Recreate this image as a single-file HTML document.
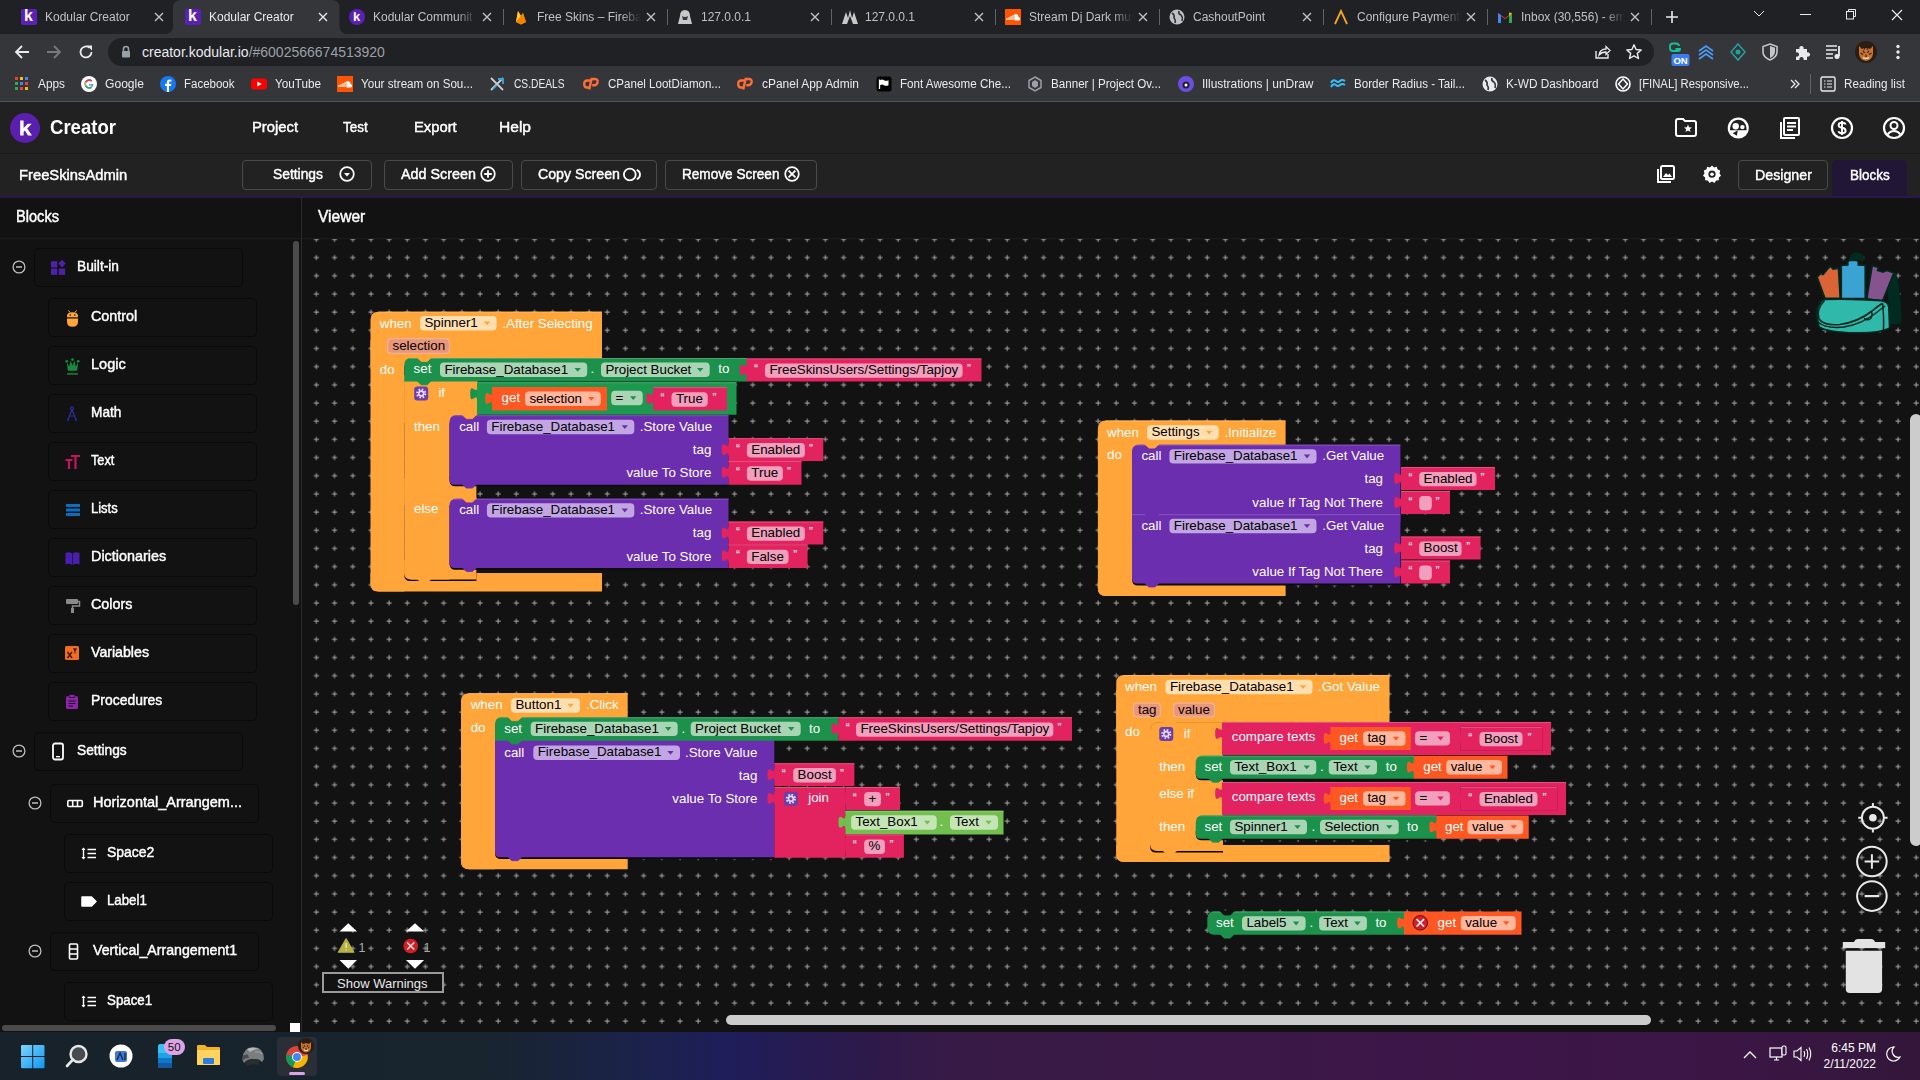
<!DOCTYPE html><html><head><meta charset="utf-8"><title>Kodular Creator</title><style>
*{box-sizing:border-box}
html,body{margin:0;padding:0}
body{width:1920px;height:1080px;position:relative;overflow:hidden;background:#121212;font-family:'Liberation Sans',sans-serif}
.t{position:absolute;white-space:nowrap;line-height:1}
.r{position:absolute}
svg{position:absolute;overflow:visible}
</style></head><body>
<div class="r" style="left:0.00px;top:0.00px;width:1920.00px;height:34.00px;background:#202124;border-radius:0px;"></div><div class="r" style="left:0.00px;top:34.00px;width:1920.00px;height:68.00px;background:#35363a;border-radius:0px;"></div><div class="r" style="left:0.00px;top:101.00px;width:1920.00px;height:1.00px;background:#4f5154;border-radius:0px;"></div><svg style="left:163px;top:0" width="188" height="35" viewBox="0 0 188 35"><path d="M0 34.5 Q10 34.5 10 26 L10 8 Q10 0 18 0 L168.5 0 Q176.5 0 176.5 8 L176.5 26 Q176.5 34.5 186.5 34.5 Z" fill="#35363a"/></svg><div class="r" style="left:20.5px;top:9px;width:16px;height:16px;background:#5b20b6;border-radius:2px"></div><div class="t" style="left:24.0px;top:8px;font-size:16px;font-weight:700;color:#fff">k</div><div class="t" style="left:45.0px;top:11px;width:104px;overflow:hidden;font-size:12px;color:#bdc1c6;-webkit-mask-image:linear-gradient(90deg,#000 80%,transparent)">Kodular Creator</div><svg style="left:153.5px;top:12px" width="10" height="10"><path d="M1 1L9 9M9 1L1 9" stroke="#bdc1c6" stroke-width="1.4"/></svg><div class="r" style="left:184.5px;top:9px;width:16px;height:16px;background:#5b20b6;border-radius:2px"></div><div class="t" style="left:188.0px;top:8px;font-size:16px;font-weight:700;color:#fff">k</div><div class="t" style="left:209.0px;top:11px;width:104px;overflow:hidden;font-size:12px;color:#e8eaed;-webkit-mask-image:linear-gradient(90deg,#000 80%,transparent)">Kodular Creator</div><svg style="left:317.5px;top:12px" width="10" height="10"><path d="M1 1L9 9M9 1L1 9" stroke="#e8eaed" stroke-width="1.4"/></svg><div class="r" style="left:348.5px;top:9px;width:16px;height:16px;background:#5b20b6;border-radius:8px"></div><div class="t" style="left:353.0px;top:10px;font-size:13px;font-weight:700;color:#fff">k</div><div class="t" style="left:373.0px;top:11px;width:104px;overflow:hidden;font-size:12px;color:#bdc1c6;-webkit-mask-image:linear-gradient(90deg,#000 80%,transparent)">Kodular Communit</div><svg style="left:481.5px;top:12px" width="10" height="10"><path d="M1 1L9 9M9 1L1 9" stroke="#bdc1c6" stroke-width="1.4"/></svg><svg style="left:512.5px;top:9px" width="16" height="16"><path d="M3 13L5 2L8 7L10 4L13 13L8 15.5Z" fill="#ffa000"/><path d="M3 13L5 2L8 7Z" fill="#ffca28"/><path d="M3 13L10 4L13 13L8 15.5Z" fill="#f57c00" opacity=".8"/></svg><div class="t" style="left:537.0px;top:11px;width:104px;overflow:hidden;font-size:12px;color:#bdc1c6;-webkit-mask-image:linear-gradient(90deg,#000 80%,transparent)">Free Skins – Firebase</div><svg style="left:645.5px;top:12px" width="10" height="10"><path d="M1 1L9 9M9 1L1 9" stroke="#bdc1c6" stroke-width="1.4"/></svg><svg style="left:676.5px;top:9px" width="16" height="16"><path d="M8 1Q3 1 3 7L1 15H15L13 7Q13 1 8 1Z" fill="#c8c8c8"/><path d="M5 7Q8 9 11 7L10 11H6Z" fill="#35363a"/></svg><div class="t" style="left:701.0px;top:11px;width:104px;overflow:hidden;font-size:12px;color:#bdc1c6;-webkit-mask-image:linear-gradient(90deg,#000 80%,transparent)">127.0.0.1</div><svg style="left:809.5px;top:12px" width="10" height="10"><path d="M1 1L9 9M9 1L1 9" stroke="#bdc1c6" stroke-width="1.4"/></svg><svg style="left:840.5px;top:9px" width="18" height="16"><path d="M1 15L5 3L7 9L9 1L11 9L13 3L17 15Z" fill="#c8c8c8"/><path d="M6 15L9 7L12 15Z" fill="#202124"/></svg><div class="t" style="left:865.0px;top:11px;width:104px;overflow:hidden;font-size:12px;color:#bdc1c6;-webkit-mask-image:linear-gradient(90deg,#000 80%,transparent)">127.0.0.1</div><svg style="left:973.5px;top:12px" width="10" height="10"><path d="M1 1L9 9M9 1L1 9" stroke="#bdc1c6" stroke-width="1.4"/></svg><svg style="left:1004.5px;top:9px" width="16" height="16"><rect width="16" height="16" fill="#ff5500"/><path d="M6 11V7M8 11V6M10 11V5.5Q13 5.5 13 8.5Q14.5 8.5 14.5 10Q14.5 11 13 11Z M4 11V8M2 11V9" stroke="#fff" stroke-width="1.2" fill="#fff"/></svg><div class="t" style="left:1029.0px;top:11px;width:104px;overflow:hidden;font-size:12px;color:#bdc1c6;-webkit-mask-image:linear-gradient(90deg,#000 80%,transparent)">Stream Dj Dark music</div><svg style="left:1137.5px;top:12px" width="10" height="10"><path d="M1 1L9 9M9 1L1 9" stroke="#bdc1c6" stroke-width="1.4"/></svg><svg style="left:1168.5px;top:9px" width="16" height="16"><circle cx="8" cy="8" r="7.5" fill="#bdc1c6"/><path d="M3 4Q6 6 5 9Q7 11 6 14M10 2Q9 5 12 6Q14 8 13 12" stroke="#35363a" stroke-width="1.6" fill="none"/></svg><div class="t" style="left:1193.0px;top:11px;width:104px;overflow:hidden;font-size:12px;color:#bdc1c6;-webkit-mask-image:linear-gradient(90deg,#000 80%,transparent)">CashoutPoint</div><svg style="left:1301.5px;top:12px" width="10" height="10"><path d="M1 1L9 9M9 1L1 9" stroke="#bdc1c6" stroke-width="1.4"/></svg><svg style="left:1332.5px;top:9px" width="16" height="16"><path d="M2 15L8 2L14 15" stroke="#f5a623" stroke-width="1.8" fill="none"/></svg><div class="t" style="left:1357.0px;top:11px;width:104px;overflow:hidden;font-size:12px;color:#bdc1c6;-webkit-mask-image:linear-gradient(90deg,#000 80%,transparent)">Configure Payments</div><svg style="left:1465.5px;top:12px" width="10" height="10"><path d="M1 1L9 9M9 1L1 9" stroke="#bdc1c6" stroke-width="1.4"/></svg><svg style="left:1496.5px;top:9px" width="16" height="16"><path d="M1 4V14H4V7L8 10L12 7V14H15V4L8 9Z" fill="#ea4335"/><path d="M1 4V14H4V6Z" fill="#4285f4"/><path d="M15 4V14H12V6Z" fill="#34a853"/><path d="M12 3.5L15 4L12 7Z" fill="#fbbc04"/></svg><div class="t" style="left:1521.0px;top:11px;width:104px;overflow:hidden;font-size:12px;color:#bdc1c6;-webkit-mask-image:linear-gradient(90deg,#000 80%,transparent)">Inbox (30,556) - email</div><svg style="left:1629.5px;top:12px" width="10" height="10"><path d="M1 1L9 9M9 1L1 9" stroke="#bdc1c6" stroke-width="1.4"/></svg><div class="r" style="left:502.50px;top:9.00px;width:1.00px;height:16.00px;background:#5f6368;border-radius:0px;"></div><div class="r" style="left:666.50px;top:9.00px;width:1.00px;height:16.00px;background:#5f6368;border-radius:0px;"></div><div class="r" style="left:830.50px;top:9.00px;width:1.00px;height:16.00px;background:#5f6368;border-radius:0px;"></div><div class="r" style="left:994.50px;top:9.00px;width:1.00px;height:16.00px;background:#5f6368;border-radius:0px;"></div><div class="r" style="left:1158.50px;top:9.00px;width:1.00px;height:16.00px;background:#5f6368;border-radius:0px;"></div><div class="r" style="left:1322.50px;top:9.00px;width:1.00px;height:16.00px;background:#5f6368;border-radius:0px;"></div><div class="r" style="left:1486.50px;top:9.00px;width:1.00px;height:16.00px;background:#5f6368;border-radius:0px;"></div><div class="r" style="left:1650.50px;top:9.00px;width:1.00px;height:16.00px;background:#5f6368;border-radius:0px;"></div><svg style="left:1665px;top:10px" width="14" height="14"><path d="M7 1V13M1 7H13" stroke="#e8eaed" stroke-width="1.6"/></svg><svg style="left:1753px;top:10px" width="12" height="8"><path d="M1 1L6 6L11 1" stroke="#e8eaed" stroke-width="1" fill="none"/></svg><div class="r" style="left:1800.00px;top:14.00px;width:11.00px;height:1.00px;background:#e8eaed;border-radius:0px;"></div><svg style="left:1844px;top:8px" width="14" height="13"><rect x="2.5" y="3.5" width="7" height="7.5" stroke="#e8eaed" stroke-width="1" fill="none"/><path d="M4.5 3.5V1.5H11.5V8.5H9.5" stroke="#e8eaed" stroke-width="1" fill="none"/></svg><svg style="left:1891px;top:9px" width="12" height="12"><path d="M1 1L11 11M11 1L1 11" stroke="#e8eaed" stroke-width="1.2"/></svg><svg style="left:14px;top:44px" width="16" height="16"><path d="M15 8H2M8 2L2 8L8 14" stroke="#e8eaed" stroke-width="1.8" fill="none"/></svg><svg style="left:46px;top:44px" width="16" height="16"><path d="M1 8H14M8 2L14 8L8 14" stroke="#77797d" stroke-width="1.8" fill="none"/></svg><svg style="left:78px;top:44px" width="16" height="16"><path d="M13.5 8A5.5 5.5 0 1 1 11.5 3.7" stroke="#e8eaed" stroke-width="1.8" fill="none"/><path d="M9 1.5H14V6.5Z" fill="#e8eaed"/></svg><div class="r" style="left:108.00px;top:38.00px;width:1546.00px;height:28.00px;background:#202124;border-radius:14px;"></div><svg style="left:121px;top:45px" width="10" height="13"><path d="M2.5 6V4A2.5 2.5 0 0 1 7.5 4V6" stroke="#9aa0a6" stroke-width="1.6" fill="none"/><rect x="1" y="6" width="8" height="6.5" rx="1" fill="#9aa0a6"/></svg><div class="t" style="left:142.00px;top:45.15px;font-size:14px;color:#e8eaed;font-weight:400;">creator.kodular.io<span style="color:#9aa0a6">/#6002566674513920</span></div><svg style="left:1594px;top:44px" width="17" height="16"><path d="M2 7V14H14V10" stroke="#e8eaed" stroke-width="1.4" fill="none"/><path d="M5 11Q6 5 12 5V2.5L16 6.5L12 10.5V8Q7.5 8 5 11Z" stroke="#e8eaed" stroke-width="1.3" fill="none"/></svg><svg style="left:1625px;top:43px" width="18" height="18"><path d="M9 1.8L11.1 6.5L16.2 7L12.3 10.4L13.5 15.5L9 12.8L4.5 15.5L5.7 10.4L1.8 7L6.9 6.5Z" stroke="#e8eaed" stroke-width="1.4" fill="none" stroke-linejoin="round"/></svg><svg style="left:1667px;top:41px" width="24" height="26"><path d="M12 5Q12 2.5 9 2.5H6Q3 2.5 3 5.5V7Q3 10 6 10H11Q13 10 13 8H8.5" stroke="#15c39a" stroke-width="1.8" fill="none"/><rect x="4.5" y="13" width="18" height="12" rx="2" fill="#3b7ded"/><text x="13.5" y="22.8" font-size="9.5" font-family="Liberation Sans" font-weight="700" fill="#fff" text-anchor="middle">ON</text></svg><svg style="left:1698px;top:44px" width="16" height="16"><path d="M1 7L8 2L15 7M1 11L8 6L15 11M1 15L8 10L15 15" stroke="#4b9bf5" stroke-width="1.7" fill="none"/></svg><svg style="left:1729px;top:43px" width="18" height="18"><path d="M9 1L16 9L9 17L2 9Z" stroke="#21a29a" stroke-width="1.5" fill="none"/><circle cx="9" cy="9" r="2.5" fill="#21a29a"/></svg><svg style="left:1761px;top:43px" width="18" height="18"><path d="M9 1L16 3.5V9Q16 14 9 17Q2 14 2 9V3.5Z" stroke="#c4c7c5" stroke-width="1.6" fill="none"/><path d="M9 3V15Q14 12.5 14 8.5V4.8Z" fill="#c4c7c5"/></svg><svg style="left:1793px;top:43px" width="18" height="18"><path d="M3 6H6.5A2.2 2.2 0 1 1 10.5 6H14V9.5A2.2 2.2 0 1 1 14 13.5V17H10.5A2.2 2.2 0 1 0 6.5 17H3V13.5A2.2 2.2 0 1 0 3 9.5Z" fill="#e8eaed"/></svg><svg style="left:1825px;top:44px" width="18" height="16"><path d="M1 2H12M1 6H12M1 10H8M1 14H8" stroke="#e8eaed" stroke-width="1.6"/><path d="M14 2V12" stroke="#e8eaed" stroke-width="1.8"/><circle cx="12" cy="12.5" r="2.5" fill="#e8eaed"/></svg><svg style="left:1855px;top:41px" width="22" height="22"><circle cx="11" cy="11" r="11" fill="#2a1e14"/><path d="M4 5L7 8Q11 6 15 8L18 5V13Q17 19 11 20Q5 19 4 13Z" fill="#c8742e"/><path d="M8 9.5L9.5 12M14 9.5L12.5 12M11 13.5V16M5.5 12L8 13.5M16.5 12L14 13.5M9 6.5L10 8.5M13 6.5L12 8.5" stroke="#2a1a10" stroke-width="1.1"/><path d="M8 16.5Q11 18.5 14 16.5" stroke="#eee" stroke-width="1.3" fill="none"/></svg><svg style="left:1895px;top:44px" width="6" height="16"><circle cx="3" cy="2.5" r="1.7" fill="#e8eaed"/><circle cx="3" cy="8" r="1.7" fill="#e8eaed"/><circle cx="3" cy="13.5" r="1.7" fill="#e8eaed"/></svg><div class="r" style="left:15.0px;top:77px;width:3px;height:3px;background:#ea4335"></div><div class="r" style="left:20.0px;top:77px;width:3px;height:3px;background:#fbbc04"></div><div class="r" style="left:25.0px;top:77px;width:3px;height:3px;background:#4285f4"></div><div class="r" style="left:15.0px;top:82px;width:3px;height:3px;background:#34a853"></div><div class="r" style="left:20.0px;top:82px;width:3px;height:3px;background:#4285f4"></div><div class="r" style="left:25.0px;top:82px;width:3px;height:3px;background:#ea4335"></div><div class="r" style="left:15.0px;top:87px;width:3px;height:3px;background:#34a853"></div><div class="r" style="left:20.0px;top:87px;width:3px;height:3px;background:#ea4335"></div><div class="r" style="left:25.0px;top:87px;width:3px;height:3px;background:#fbbc04"></div><div class="t" style="left:38.00px;top:77.84px;font-size:12px;color:#e8eaed;font-weight:400;transform:scaleX(0.9871);transform-origin:0 0;">Apps</div><svg style="left:81.0px;top:76px" width="16" height="16"><circle cx="8" cy="8" r="8" fill="#fff"/><path d="M12.5 8.2H8V9.6H11A3.2 3.2 0 1 1 10.3 5.6L11.3 4.6A4.6 4.6 0 1 0 12.5 8.2Z" fill="#4285f4"/><path d="M4.1 6.1A4.6 4.6 0 0 1 11.3 4.6L10.3 5.6A3.2 3.2 0 0 0 5.4 6.8Z" fill="#ea4335"/><path d="M4.1 6.1L5.4 6.8A3.2 3.2 0 0 0 5.4 9.2L4.1 10Z" fill="#fbbc04"/><path d="M4.1 10L5.4 9.2A3.2 3.2 0 0 0 10 10.8L11 12A4.6 4.6 0 0 1 4.1 10Z" fill="#34a853"/></svg><div class="t" style="left:104.50px;top:77.84px;font-size:12px;color:#e8eaed;font-weight:400;transform:scaleX(1.0079);transform-origin:0 0;">Google</div><svg style="left:160.0px;top:76px" width="16" height="16"><circle cx="8" cy="8" r="8" fill="#1877f2"/><path d="M9 16V10H11L11.3 7.8H9V6.5Q9 5.6 10 5.6H11.4V3.7Q10.6 3.5 9.7 3.5Q6.9 3.5 6.9 6.3V7.8H5V10H6.9V16Z" fill="#fff"/></svg><div class="t" style="left:184.00px;top:77.84px;font-size:12px;color:#e8eaed;font-weight:400;transform:scaleX(0.9583);transform-origin:0 0;">Facebook</div><svg style="left:251.0px;top:76px" width="16" height="16"><rect x="0" y="2.5" width="16" height="11" rx="3" fill="#ff0000"/><path d="M6.3 5.5L10.8 8L6.3 10.5Z" fill="#fff"/></svg><div class="t" style="left:274.50px;top:77.84px;font-size:12px;color:#e8eaed;font-weight:400;transform:scaleX(0.9755);transform-origin:0 0;">YouTube</div><svg style="left:337.0px;top:76px" width="16" height="16"><rect width="16" height="16" fill="#ff5500"/><path d="M6 11V7M8 11V6M10 11V5.5Q13 5.5 13 8.5Q14.5 8.5 14.5 10Q14.5 11 13 11Z M4 11V8M2 11V9" stroke="#fff" stroke-width="1.2" fill="#fff"/></svg><div class="t" style="left:361.00px;top:77.84px;font-size:12px;color:#e8eaed;font-weight:400;transform:scaleX(0.9687);transform-origin:0 0;">Your stream on Sou...</div><svg style="left:489.0px;top:76px" width="16" height="16"><path d="M2 2L14 14M14 2L2 14" stroke="#c8ccd0" stroke-width="1.8"/><path d="M9 3L14 3L14 8" stroke="#3aa8d8" stroke-width="1.8" fill="none"/><path d="M4 13L8 9" stroke="#3aa8d8" stroke-width="1.6"/></svg><div class="t" style="left:514.00px;top:77.84px;font-size:12px;color:#e8eaed;font-weight:400;transform:scaleX(0.8508);transform-origin:0 0;">CS.DEALS</div><svg style="left:583.0px;top:76px" width="16" height="16"><path d="M7.2 4.5H4.2Q1.2 4.5 1.2 8Q1.2 11.5 4 11.5H5.5M6.2 13.5L8.6 3H11.8Q15 3 14.6 6.2Q14.2 9.3 11 9.3H9.2" stroke="#ff6c37" stroke-width="2.4" fill="none"/></svg><div class="t" style="left:608.00px;top:77.84px;font-size:12px;color:#e8eaed;font-weight:400;transform:scaleX(0.9625);transform-origin:0 0;">CPanel LootDiamon...</div><svg style="left:737.0px;top:76px" width="16" height="16"><path d="M7.2 4.5H4.2Q1.2 4.5 1.2 8Q1.2 11.5 4 11.5H5.5M6.2 13.5L8.6 3H11.8Q15 3 14.6 6.2Q14.2 9.3 11 9.3H9.2" stroke="#ff6c37" stroke-width="2.4" fill="none"/></svg><div class="t" style="left:762.00px;top:77.84px;font-size:12px;color:#e8eaed;font-weight:400;transform:scaleX(0.9959);transform-origin:0 0;">cPanel App Admin</div><svg style="left:876.0px;top:76px" width="16" height="16"><rect x="0.5" y="0.5" width="15" height="15" rx="2.5" fill="#000"/><path d="M3.5 3.5V13" stroke="#fff" stroke-width="1.3"/><path d="M4 4.2Q6 3 8 4.2Q10 5.4 12.5 4.2V9.2Q10 10.4 8 9.2Q6 8 4 9.2Z" fill="#fff"/></svg><div class="t" style="left:900.00px;top:77.84px;font-size:12px;color:#e8eaed;font-weight:400;transform:scaleX(0.9694);transform-origin:0 0;">Font Awesome Che...</div><svg style="left:1027.0px;top:76px" width="16" height="16"><path d="M8 1L14 4.5V11.5L8 15L2 11.5V4.5Z" stroke="#9aa0a6" stroke-width="1.5" fill="none"/><path d="M8 4L11 6V10L8 12L5 10V6Z" fill="#9aa0a6"/></svg><div class="t" style="left:1051.00px;top:77.84px;font-size:12px;color:#e8eaed;font-weight:400;transform:scaleX(0.9682);transform-origin:0 0;">Banner | Project Ov...</div><svg style="left:1178.0px;top:76px" width="16" height="16"><circle cx="8" cy="8" r="8" fill="#6c4ee3"/><circle cx="8" cy="9" r="3.5" fill="#202124"/><circle cx="8" cy="9" r="1.5" fill="#fff"/></svg><div class="t" style="left:1202.00px;top:77.84px;font-size:12px;color:#e8eaed;font-weight:400;transform:scaleX(0.9971);transform-origin:0 0;">Illustrations | unDraw</div><svg style="left:1330.0px;top:76px" width="16" height="16"><path d="M1 7Q3 3 6 5Q8 7 10 5Q12 3 15 5M1 11Q3 7 6 9Q8 11 10 9Q12 7 15 9" stroke="#38bdf8" stroke-width="2" fill="none"/></svg><div class="t" style="left:1354.00px;top:77.84px;font-size:12px;color:#e8eaed;font-weight:400;transform:scaleX(0.9639);transform-origin:0 0;">Border Radius - Tail...</div><svg style="left:1482.0px;top:76px" width="16" height="16"><circle cx="8" cy="8" r="7.5" fill="#e8eaed"/><path d="M3 4Q6 6 5 9Q7 11 6 14M10 2Q9 5 12 6Q14 8 13 12" stroke="#35363a" stroke-width="1.6" fill="none"/></svg><div class="t" style="left:1506.00px;top:77.84px;font-size:12px;color:#e8eaed;font-weight:400;transform:scaleX(0.9837);transform-origin:0 0;">K-WD Dashboard</div><svg style="left:1615.0px;top:76px" width="16" height="16"><circle cx="8" cy="8" r="7" stroke="#fff" stroke-width="1.6" fill="none"/><path d="M8 3L12.5 8L8 13L3.5 8Z" stroke="#fff" stroke-width="1.5" fill="none"/></svg><div class="t" style="left:1639.00px;top:77.84px;font-size:12px;color:#e8eaed;font-weight:400;transform:scaleX(0.9425);transform-origin:0 0;">[FINAL] Responsive...</div><svg style="left:1790px;top:79px" width="10" height="10"><path d="M1 1L5 5L1 9M5 1L9 5L5 9" stroke="#e8eaed" stroke-width="1.3" fill="none"/></svg><div class="r" style="left:1810.00px;top:74.00px;width:1.00px;height:20.00px;background:#5f6368;border-radius:0px;"></div><svg style="left:1820px;top:76px" width="16" height="16"><rect x="1" y="1" width="14" height="14" rx="1.5" stroke="#e8eaed" stroke-width="1.4" fill="none"/><path d="M4 5H5.5M7 5H12M4 8H5.5M7 8H12M4 11H5.5M7 11H12" stroke="#e8eaed" stroke-width="1.2"/></svg><div class="t" style="left:1844.00px;top:77.84px;font-size:12px;color:#e8eaed;font-weight:400;transform:scaleX(0.9729);transform-origin:0 0;">Reading list</div><div class="r" style="left:0.00px;top:102.00px;width:1920.00px;height:51.00px;background:#212121;border-radius:0px;"></div><div class="r" style="left:0.00px;top:153.00px;width:1920.00px;height:1.00px;background:#1a1a1a;border-radius:0px;"></div><div class="r" style="left:0.00px;top:154.00px;width:1920.00px;height:42.00px;background:#222222;border-radius:0px;"></div><div class="r" style="left:0.00px;top:196.00px;width:1920.00px;height:2.00px;background:#28194a;border-radius:0px;"></div><svg style="left:10px;top:113px" width="30" height="30"><circle cx="15" cy="15" r="15" fill="#5a1fad"/><path d="M10.2 7.5H13.6V15L17.8 10.8H21.8L17.2 15.4L22 22.5H18L14.9 17.6L13.6 18.8V22.5H10.2Z" fill="#fff"/></svg><div class="t" style="left:50.00px;top:116.89px;font-size:20.8px;color:#ffffff;font-weight:700;transform:scaleX(0.8922);transform-origin:0 0;">Creator</div><div class="t" style="left:251.70px;top:118.96px;font-size:15.4px;color:#ffffff;font-weight:400;transform:scaleX(0.9618);transform-origin:0 0;-webkit-text-stroke:0.45px #fff">Project</div><div class="t" style="left:343.10px;top:118.96px;font-size:15.4px;color:#ffffff;font-weight:400;transform:scaleX(0.8745);transform-origin:0 0;-webkit-text-stroke:0.45px #fff">Test</div><div class="t" style="left:413.75px;top:118.96px;font-size:15.4px;color:#ffffff;font-weight:400;transform:scaleX(0.9594);transform-origin:0 0;-webkit-text-stroke:0.45px #fff">Export</div><div class="t" style="left:498.60px;top:118.96px;font-size:15.4px;color:#ffffff;font-weight:400;transform:scaleX(1.0103);transform-origin:0 0;-webkit-text-stroke:0.45px #fff">Help</div><svg style="left:1674px;top:116px" width="24" height="24"><path d="M2 5Q2 3 4 3H9L11 5H20Q22 5 22 7V18Q22 20 20 20H4Q2 20 2 18Z" stroke="#fff" stroke-width="2" fill="none"/><path d="M14 8.5L15.1 11.2L18 11.4L15.8 13.2L16.5 16L14 14.5L11.5 16L12.2 13.2L10 11.4L12.9 11.2Z" fill="#fff"/></svg><svg style="left:1726px;top:116px" width="24" height="24"><circle cx="12.3" cy="12" r="10.6" fill="#fff"/><path d="M4 14.3C4 7.5 7.5 3.8 12.3 3.8C17.1 3.8 20.6 7.5 20.6 14.3Z" fill="#212121"/><circle cx="9.7" cy="10.3" r="3.2" fill="#fff"/><circle cx="16.4" cy="11.1" r="2.2" fill="#fff"/><path d="M6.7 17.3L11.8 14.2L10.9 19.7Z" fill="#212121"/></svg><svg style="left:1778px;top:116px" width="24" height="24"><rect x="6" y="2" width="15" height="17" rx="1" stroke="#fff" stroke-width="2" fill="none"/><path d="M3 6V22H17" stroke="#fff" stroke-width="2" fill="none"/><path d="M9 7H18M9 10.5H18M9 14H15" stroke="#fff" stroke-width="1.8"/></svg><svg style="left:1830px;top:116px" width="24" height="24"><circle cx="12" cy="12" r="10" stroke="#fff" stroke-width="2.2" fill="none"/><path d="M15.5 8.5Q15 6.8 12 6.8Q8.6 6.8 8.6 9.2Q8.6 11.3 12 11.8Q15.6 12.4 15.6 14.7Q15.6 17.2 12 17.2Q9 17.2 8.4 15.3M12 5V19" stroke="#fff" stroke-width="1.9" fill="none"/></svg><svg style="left:1882px;top:116px" width="24" height="24"><circle cx="12" cy="12" r="10" stroke="#fff" stroke-width="2.2" fill="none"/><circle cx="12" cy="9.5" r="3.5" stroke="#fff" stroke-width="2" fill="none"/><path d="M5.5 18.5Q8 15 12 15Q16 15 18.5 18.5" stroke="#fff" stroke-width="2" fill="none"/></svg><div class="t" style="left:19.30px;top:166.68px;font-size:15.5px;color:#ffffff;font-weight:400;transform:scaleX(0.9524);transform-origin:0 0;-webkit-text-stroke:0.45px #fff">FreeSkinsAdmin</div><div class="r" style="left:242px;top:160px;width:130px;height:30px;border:1px solid #4a4a4a;border-radius:4px"></div><div class="t" style="left:272.50px;top:166.26px;font-size:15.4px;color:#ffffff;font-weight:400;transform:scaleX(0.8986);transform-origin:0 0;-webkit-text-stroke:0.45px #fff">Settings</div><div class="r" style="left:384px;top:160px;width:128.5px;height:30px;border:1px solid #4a4a4a;border-radius:4px"></div><div class="t" style="left:401.00px;top:166.26px;font-size:15.4px;color:#ffffff;font-weight:400;transform:scaleX(0.9320);transform-origin:0 0;-webkit-text-stroke:0.45px #fff">Add Screen</div><div class="r" style="left:521px;top:160px;width:135.5px;height:30px;border:1px solid #4a4a4a;border-radius:4px"></div><div class="t" style="left:538.00px;top:166.26px;font-size:15.4px;color:#ffffff;font-weight:400;transform:scaleX(0.9211);transform-origin:0 0;-webkit-text-stroke:0.45px #fff">Copy Screen</div><div class="r" style="left:665px;top:160px;width:151.5px;height:30px;border:1px solid #4a4a4a;border-radius:4px"></div><div class="t" style="left:681.50px;top:166.26px;font-size:15.4px;color:#ffffff;font-weight:400;transform:scaleX(0.8830);transform-origin:0 0;-webkit-text-stroke:0.45px #fff">Remove Screen</div><svg style="left:338.5px;top:166px" width="16" height="16"><circle cx="8" cy="8" r="6.8" stroke="#fff" stroke-width="1.7" fill="none"/><path d="M5 7H11L8 10.5Z" fill="#fff"/></svg><svg style="left:480px;top:166px" width="16" height="16"><circle cx="8" cy="8" r="6.8" stroke="#fff" stroke-width="1.7" fill="none"/><path d="M8 4.2V11.8M4.2 8H11.8" stroke="#fff" stroke-width="1.8"/></svg><svg style="left:622px;top:166px" width="22" height="17"><circle cx="7.8" cy="8.5" r="5.9" stroke="#fff" stroke-width="1.8" fill="none"/><path d="M14.7 3.8A5 5 0 0 1 14.7 13.2" stroke="#fff" stroke-width="1.8" fill="none"/></svg><svg style="left:783.6px;top:166px" width="16" height="16"><circle cx="8" cy="8" r="6.8" stroke="#fff" stroke-width="1.7" fill="none"/><path d="M4.6 4.6L11.4 11.4M11.4 4.6L4.6 11.4" stroke="#fff" stroke-width="1.8"/></svg><svg style="left:1656px;top:164px" width="20" height="20"><rect x="5" y="2" width="13" height="13" rx="1.5" stroke="#fff" stroke-width="2" fill="none"/><path d="M2 5V18H15" stroke="#fff" stroke-width="2" fill="none"/><path d="M7 13L10 9L12 11L13.5 9.5L16 13Z" fill="#fff"/></svg><svg style="left:1702px;top:164px" width="20" height="20"><path d="M10 1.5L12 3.5L14.8 2.8L15.6 5.5L18.2 6.5L17.5 9.3L19 11.7L16.8 13.4L16.9 16.3L14.1 16.6L12.5 19L10 17.6L7.5 19L5.9 16.6L3.1 16.3L3.2 13.4L1 11.7L2.5 9.3L1.8 6.5L4.4 5.5L5.2 2.8L8 3.5Z" fill="#fff"/><circle cx="10" cy="10.2" r="3.6" fill="#222"/><circle cx="10" cy="10.2" r="1.8" fill="#fff"/></svg><div class="r" style="left:1737.5px;top:160px;width:90px;height:30px;border:1px solid #4a4a4a;border-radius:4px"></div><div class="t" style="left:1754.50px;top:166.86px;font-size:15.4px;color:#ffffff;font-weight:400;transform:scaleX(0.9232);transform-origin:0 0;-webkit-text-stroke:0.45px #fff">Designer</div><div class="r" style="left:1832.20px;top:160.00px;width:74.40px;height:36.00px;background:#211636;border-radius:0px;border-radius:5px 5px 0 0"></div><div class="t" style="left:1849.70px;top:166.86px;font-size:15.4px;color:#ffffff;font-weight:400;transform:scaleX(0.8753);transform-origin:0 0;-webkit-text-stroke:0.45px #fff">Blocks</div><div class="r" style="left:0.00px;top:198.00px;width:301.00px;height:834.00px;background:#121212;border-radius:0px;"></div><div class="r" style="left:301.00px;top:198.00px;width:1.00px;height:834.00px;background:#2a2a2a;border-radius:0px;"></div><div class="r" style="left:302.00px;top:198.00px;width:1618.00px;height:834.00px;background:#121212;border-radius:0px;"></div><div class="t" style="left:16.40px;top:208.73px;font-size:15.8px;color:#ffffff;font-weight:400;transform:scaleX(0.9240);transform-origin:0 0;-webkit-text-stroke:0.45px #fff">Blocks</div><div class="t" style="left:318.00px;top:208.73px;font-size:15.8px;color:#ffffff;font-weight:400;transform:scaleX(0.9852);transform-origin:0 0;-webkit-text-stroke:0.45px #fff">Viewer</div><div class="r" style="left:0.00px;top:238.00px;width:301.00px;height:1.00px;background:#1b1b1b;border-radius:0px;"></div><div class="r" style="left:302.00px;top:238.00px;width:1618.00px;height:1.00px;background:#1b1b1b;border-radius:0px;"></div><div class="r" style="left:292.50px;top:241.00px;width:6.00px;height:364.00px;background:#4b4b4b;border-radius:3px;"></div><div class="r" style="left:33.5px;top:247.5px;width:209.0px;height:39.0px;border:1px solid #0a0a0a;border-radius:5px"></div><svg style="left:12px;top:260.0px" width="14" height="14"><circle cx="7" cy="7" r="5.9" stroke="#bdbdbd" stroke-width="1.3" fill="none"/><path d="M4 7H10" stroke="#bdbdbd" stroke-width="1.5"/></svg><svg style="left:51.0px;top:259.0px" width="16" height="18"><rect x="0" y="2.2" width="6.3" height="6.3" fill="#4e22a8"/><rect x="0" y="9.6" width="6.3" height="6.3" fill="#4e22a8"/><rect x="7.8" y="9.6" width="6.3" height="6.3" fill="#4e22a8"/><path d="M11 0.8L14.8 4.6L11 8.4L7.2 4.6Z" fill="#4e22a8"/></svg><div class="t" style="left:77.00px;top:258.16px;font-size:15.4px;color:#ffffff;font-weight:400;transform:scaleX(0.8922);transform-origin:0 0;-webkit-text-stroke:0.45px #fff">Built-in</div><div class="r" style="left:47.5px;top:297.5px;width:209.0px;height:39.0px;border:1px solid #0a0a0a;border-radius:5px"></div><svg style="left:64.5px;top:309.0px" width="16" height="18"><path d="M3.5 1.3L5 3.6M11.5 1.3L10 3.6" stroke="#ffa63a" stroke-width="1"/><path d="M2 8.3V6.8Q2 3.2 7.5 3.2Q13 3.2 13 6.8V8.3Z" fill="#ffa63a"/><path d="M2 9.4H13V12.8Q13 17.8 7.5 17.8Q2 17.8 2 12.8Z" fill="#ffa63a"/><rect x="4.6" y="5.3" width="1.3" height="1.4" fill="#121212"/><rect x="9.1" y="5.3" width="1.3" height="1.4" fill="#121212"/></svg><div class="t" style="left:91.00px;top:308.16px;font-size:15.4px;color:#ffffff;font-weight:400;transform:scaleX(0.9326);transform-origin:0 0;-webkit-text-stroke:0.45px #fff">Control</div><div class="r" style="left:47.5px;top:345.5px;width:209.0px;height:39.0px;border:1px solid #0a0a0a;border-radius:5px"></div><svg style="left:64.5px;top:357.0px" width="16" height="18"><path d="M1.8 5L4.2 9.5L5.6 3.6L7.5 8.6L9.4 3.6L10.8 9.5L13.2 5L12.2 13.8H2.8Z" fill="#168a3e"/><circle cx="1.8" cy="4.3" r="1.4" fill="#168a3e"/><circle cx="7.5" cy="2.6" r="1.4" fill="#168a3e"/><circle cx="13.2" cy="4.3" r="1.4" fill="#168a3e"/><rect x="2" y="16.2" width="11" height="1.4" fill="#168a3e"/></svg><div class="t" style="left:91.00px;top:356.16px;font-size:15.4px;color:#ffffff;font-weight:400;transform:scaleX(0.9452);transform-origin:0 0;-webkit-text-stroke:0.45px #fff">Logic</div><div class="r" style="left:47.5px;top:393.5px;width:209.0px;height:39.0px;border:1px solid #0a0a0a;border-radius:5px"></div><svg style="left:64.5px;top:405.0px" width="16" height="18"><path d="M2.5 16L7 4.5L11.5 16" stroke="#2e2a90" stroke-width="1.5" fill="none"/><circle cx="7" cy="3.5" r="1.6" stroke="#2e2a90" stroke-width="1.1" fill="none"/><path d="M5 11H9" stroke="#2e2a90" stroke-width="1"/></svg><div class="t" style="left:91.00px;top:404.16px;font-size:15.4px;color:#ffffff;font-weight:400;transform:scaleX(0.8879);transform-origin:0 0;-webkit-text-stroke:0.45px #fff">Math</div><div class="r" style="left:47.5px;top:441.5px;width:209.0px;height:39.0px;border:1px solid #0a0a0a;border-radius:5px"></div><svg style="left:64.5px;top:453.0px" width="16" height="18"><path d="M0.5 7H7.5M4 7V16M6 3H15M10.5 3V16" stroke="#c2185b" stroke-width="2.2" fill="none"/></svg><div class="t" style="left:91.00px;top:452.16px;font-size:15.4px;color:#ffffff;font-weight:400;transform:scaleX(0.8250);transform-origin:0 0;-webkit-text-stroke:0.45px #fff">Text</div><div class="r" style="left:47.5px;top:489.5px;width:209.0px;height:39.0px;border:1px solid #0a0a0a;border-radius:5px"></div><svg style="left:64.5px;top:501.0px" width="16" height="18"><rect x="1" y="3" width="14" height="3" fill="#0b6fc0"/><rect x="1" y="7.5" width="14" height="3" fill="#0b6fc0"/><rect x="1" y="12" width="14" height="3" fill="#0b6fc0"/></svg><div class="t" style="left:91.00px;top:500.16px;font-size:15.4px;color:#ffffff;font-weight:400;transform:scaleX(0.8432);transform-origin:0 0;-webkit-text-stroke:0.45px #fff">Lists</div><div class="r" style="left:47.5px;top:537.5px;width:209.0px;height:39.0px;border:1px solid #0a0a0a;border-radius:5px"></div><svg style="left:64.5px;top:549.0px" width="16" height="18"><path d="M0.5 4Q4 2.5 7.2 4.5V16Q4 14 0.5 15.5Z M14.5 4Q11 2.5 7.8 4.5V16Q11 14 14.5 15.5Z" fill="#4a1fb0"/></svg><div class="t" style="left:91.00px;top:548.16px;font-size:15.4px;color:#ffffff;font-weight:400;transform:scaleX(0.9347);transform-origin:0 0;-webkit-text-stroke:0.45px #fff">Dictionaries</div><div class="r" style="left:47.5px;top:585.5px;width:209.0px;height:39.0px;border:1px solid #0a0a0a;border-radius:5px"></div><svg style="left:64.5px;top:597.0px" width="16" height="18"><rect x="1" y="2" width="12" height="5" rx="1" fill="#8a8a8a"/><path d="M13 4.5H14.5V9H7.5V11" stroke="#8a8a8a" stroke-width="1.5" fill="none"/><rect x="6" y="11" width="3" height="5" fill="#8a8a8a"/></svg><div class="t" style="left:91.00px;top:596.16px;font-size:15.4px;color:#ffffff;font-weight:400;transform:scaleX(0.9326);transform-origin:0 0;-webkit-text-stroke:0.45px #fff">Colors</div><div class="r" style="left:47.5px;top:633.5px;width:209.0px;height:39.0px;border:1px solid #0a0a0a;border-radius:5px"></div><svg style="left:64.5px;top:645.0px" width="16" height="18"><rect x="0" y="1" width="14" height="14" rx="1.5" fill="#f26c21"/><path d="M2.5 7L7 13M7 7L2.5 13" stroke="#4a1a08" stroke-width="1.5"/><path d="M8.5 3.5L10 6L11.5 3.5M10 6V8.5" stroke="#4a1a08" stroke-width="1"/></svg><div class="t" style="left:91.00px;top:644.16px;font-size:15.4px;color:#ffffff;font-weight:400;transform:scaleX(0.9198);transform-origin:0 0;-webkit-text-stroke:0.45px #fff">Variables</div><div class="r" style="left:47.5px;top:681.5px;width:209.0px;height:39.0px;border:1px solid #0a0a0a;border-radius:5px"></div><svg style="left:64.5px;top:693.0px" width="16" height="18"><rect x="1" y="3" width="12" height="13" rx="1.5" fill="#8e24aa"/><rect x="4" y="1.5" width="6" height="3" rx="1" fill="#8e24aa" stroke="#121212" stroke-width=".8"/><path d="M3.5 8H10.5M3.5 10.5H10.5M3.5 13H8" stroke="#121212" stroke-width="1"/></svg><div class="t" style="left:91.00px;top:692.16px;font-size:15.4px;color:#ffffff;font-weight:400;transform:scaleX(0.9054);transform-origin:0 0;-webkit-text-stroke:0.45px #fff">Procedures</div><div class="r" style="left:33.5px;top:731.5px;width:209.0px;height:39.0px;border:1px solid #0a0a0a;border-radius:5px"></div><svg style="left:12px;top:744.0px" width="14" height="14"><circle cx="7" cy="7" r="5.9" stroke="#bdbdbd" stroke-width="1.3" fill="none"/><path d="M4 7H10" stroke="#bdbdbd" stroke-width="1.5"/></svg><svg style="left:51.0px;top:743.0px" width="16" height="18"><rect x="2" y="0.5" width="10" height="16" rx="2" stroke="#fff" stroke-width="1.8" fill="none"/><rect x="5" y="13" width="4" height="1.3" fill="#fff"/></svg><div class="t" style="left:77.00px;top:742.16px;font-size:15.4px;color:#ffffff;font-weight:400;transform:scaleX(0.8932);transform-origin:0 0;-webkit-text-stroke:0.45px #fff">Settings</div><div class="r" style="left:49.5px;top:783.5px;width:209.0px;height:39.0px;border:1px solid #0a0a0a;border-radius:5px"></div><svg style="left:28px;top:796.0px" width="14" height="14"><circle cx="7" cy="7" r="5.9" stroke="#bdbdbd" stroke-width="1.3" fill="none"/><path d="M4 7H10" stroke="#bdbdbd" stroke-width="1.5"/></svg><svg style="left:67.0px;top:795.0px" width="16" height="18"><rect x="0.8" y="5.5" width="14.5" height="6" rx="1" stroke="#fff" stroke-width="1.6" fill="none"/><path d="M5.7 5.5V11.5M10.5 5.5V11.5" stroke="#fff" stroke-width="1.6"/></svg><div class="t" style="left:93.00px;top:794.16px;font-size:15.4px;color:#ffffff;font-weight:400;transform:scaleX(0.9416);transform-origin:0 0;-webkit-text-stroke:0.45px #fff">Horizontal_Arrangem...</div><div class="r" style="left:63.5px;top:833.5px;width:209.0px;height:39.0px;border:1px solid #0a0a0a;border-radius:5px"></div><svg style="left:80.5px;top:845.0px" width="16" height="18"><path d="M2.5 3V14" stroke="#fff" stroke-width="1.4"/><path d="M0.5 5L2.5 2.5L4.5 5M0.5 12L2.5 14.5L4.5 12Z" fill="#fff"/><path d="M6.5 4.5H15M6.5 8.5H15M6.5 12.5H15" stroke="#fff" stroke-width="1.6"/></svg><div class="t" style="left:107.00px;top:844.16px;font-size:15.4px;color:#ffffff;font-weight:400;transform:scaleX(0.9075);transform-origin:0 0;-webkit-text-stroke:0.45px #fff">Space2</div><div class="r" style="left:63.5px;top:881.5px;width:209.0px;height:39.0px;border:1px solid #0a0a0a;border-radius:5px"></div><svg style="left:80.5px;top:893.0px" width="16" height="18"><path d="M1 4H10.5L15 8.5L10.5 13H1Z" fill="#fff" stroke="#fff" stroke-linejoin="round" stroke-width="1.5"/></svg><div class="t" style="left:107.00px;top:892.16px;font-size:15.4px;color:#ffffff;font-weight:400;transform:scaleX(0.8606);transform-origin:0 0;-webkit-text-stroke:0.45px #fff">Label1</div><div class="r" style="left:49.5px;top:931.5px;width:209.0px;height:39.0px;border:1px solid #0a0a0a;border-radius:5px"></div><svg style="left:28px;top:944.0px" width="14" height="14"><circle cx="7" cy="7" r="5.9" stroke="#bdbdbd" stroke-width="1.3" fill="none"/><path d="M4 7H10" stroke="#bdbdbd" stroke-width="1.5"/></svg><svg style="left:67.0px;top:943.0px" width="16" height="18"><rect x="2.5" y="1" width="8" height="15" rx="1" stroke="#fff" stroke-width="1.6" fill="none"/><path d="M2.5 6H10.5M2.5 11H10.5" stroke="#fff" stroke-width="1.6"/></svg><div class="t" style="left:93.00px;top:942.16px;font-size:15.4px;color:#ffffff;font-weight:400;transform:scaleX(0.9205);transform-origin:0 0;-webkit-text-stroke:0.45px #fff">Vertical_Arrangement1</div><div class="r" style="left:63.5px;top:981.5px;width:209.0px;height:39.0px;border:1px solid #0a0a0a;border-radius:5px"></div><svg style="left:80.5px;top:993.0px" width="16" height="18"><path d="M2.5 3V14" stroke="#fff" stroke-width="1.4"/><path d="M0.5 5L2.5 2.5L4.5 5M0.5 12L2.5 14.5L4.5 12Z" fill="#fff"/><path d="M6.5 4.5H15M6.5 8.5H15M6.5 12.5H15" stroke="#fff" stroke-width="1.6"/></svg><div class="t" style="left:107.00px;top:992.16px;font-size:15.4px;color:#ffffff;font-weight:400;transform:scaleX(0.8654);transform-origin:0 0;-webkit-text-stroke:0.45px #fff">Space1</div><div class="r" style="left:1.50px;top:1025.00px;width:274.00px;height:6.00px;background:#4b4b4b;border-radius:3px;"></div><div class="r" style="left:290.00px;top:1023.00px;width:10.00px;height:9.00px;background:#ffffff;border-radius:0px;"></div><svg style="left:302px;top:239px" width="1618" height="793"><defs><pattern id="g" x="11.4" y="-2.58" width="18.18" height="18.18" patternUnits="userSpaceOnUse"><path d="M0.5 3H5.5M3 0.5V5.5" stroke="#9a9a9a" stroke-width="1.1"/></pattern></defs><rect width="1618" height="793" fill="url(#g)"/></svg><svg style="left:0;top:0" width="1920" height="1080" font-family="Liberation Sans"><path d="M378.50 311.70H602.00V366.00H370.50V319.70Q370.50 311.70 378.50 311.70Z" fill="#ffa53a"/><rect x="378.00" y="311.70" width="224.00" height="0.9" fill="#ffb865"/><path d="M370.50 340.00H404.30V591.60H378.50Q370.50 591.60 370.50 583.60V340.00Z" fill="#ffa53a"/><path d="M370.50 573.00H602.00V591.60H378.50Q370.50 591.60 370.50 583.60V573.00Z" fill="#ffa53a"/><text x="379.80" y="328.00" fill="#fff" font-size="13.33" text-anchor="start">when</text><path d="M424.00 316.00H492.60Q496.60 316.00 496.60 320.00V326.40Q496.60 330.40 492.60 330.40H424.00Q420.00 330.40 420.00 326.40V320.00Q420.00 316.00 424.00 316.00Z" fill="#ffdfb0"/><text x="424.40" y="326.90" fill="#000" font-size="13.33" text-anchor="start">Spinner1</text><path d="M483.90 321.40H490.30L487.10 325.20Z" fill="#ffa53a"/><text x="502.30" y="328.00" fill="#fff" font-size="13.33" text-anchor="start">.After Selecting</text><path d="M391.00 338.00H446.00Q450.00 338.00 450.00 342.00V350.00Q450.00 354.00 446.00 354.00H391.00Q387.00 354.00 387.00 350.00V342.00Q387.00 338.00 391.00 338.00Z" fill="#f0b294"/><path d="M391.70 339.20H445.30Q448.80 339.20 448.80 342.70V349.30Q448.80 352.80 445.30 352.80H391.70Q388.20 352.80 388.20 349.30V342.70Q388.20 339.20 391.70 339.20Z" fill="#e9977a"/><text x="392.50" y="349.80" fill="#000" font-size="13.33" text-anchor="start">selection</text><text x="379.80" y="373.50" fill="#fff" font-size="13.33" text-anchor="start">do</text><path d="M404.30 571.40H476.40V581.00H410.30Q404.30 581.00 404.30 575.00V571.40Z" fill="#0b0b0b"/><path d="M404.30 375.00H477.50V423.30H404.30V375.00Z" fill="#ffa53a"/><path d="M404.30 375.00H449.50V579.40H411.30Q404.30 579.40 404.30 572.40V375.00Z" fill="#ffa53a"/><path d="M404.30 478.00H476.40V505.00H404.30V478.00Z" fill="#ffa53a"/><path d="M404.30 560.00H476.40V579.40H411.30Q404.30 579.40 404.30 572.40V560.00Z" fill="#ffa53a"/><path d="M417.10 578.80L421.10 582.80H427.30L431.30 578.80Z" fill="#ffa53a" stroke="#ffa53a" stroke-width="0.8" stroke-linejoin="round"/><path d="M417.20 386.50H425.20Q428.20 386.50 428.20 389.50V397.50Q428.20 400.50 425.20 400.50H417.20Q414.20 400.50 414.20 397.50V389.50Q414.20 386.50 417.20 386.50Z" fill="#6b3fa8"/><g transform="translate(421.20 393.50)"><circle r="4" fill="none" stroke="#e6d8ff" stroke-width="2.2" stroke-dasharray="1.6 1.54"/><circle r="3.2" fill="#e6d8ff"/><circle r="1.6" fill="#6b3fa8"/></g><text x="438.40" y="397.30" fill="#fff" font-size="13.33" text-anchor="start">if</text><text x="414.00" y="430.50" fill="#fff" font-size="13.33" text-anchor="start">then</text><text x="414.00" y="512.80" fill="#fff" font-size="13.33" text-anchor="start">else</text><path d="M411.30 358.10H747.00V381.40H404.30V365.10Q404.30 358.10 411.30 358.10Z" fill="#1b914b"/><rect x="408.50" y="358.10" width="338.50" height="0.9" fill="#4da972"/><path d="M417.10 357.50L421.10 361.50H427.30L431.30 357.50Z" fill="#ffa53a" stroke="#ffa53a" stroke-width="0.8" stroke-linejoin="round"/><path d="M417.10 380.80L421.10 384.80H427.30L431.30 380.80Z" fill="#1b914b" stroke="#1b914b" stroke-width="0.8" stroke-linejoin="round"/><text x="413.60" y="373.40" fill="#fff" font-size="13.33" text-anchor="start">set</text><path d="M444.00 362.60H583.20Q587.20 362.60 587.20 366.60V373.00Q587.20 377.00 583.20 377.00H444.00Q440.00 377.00 440.00 373.00V366.60Q440.00 362.60 444.00 362.60Z" fill="#a9d5b4"/><text x="444.40" y="373.50" fill="#000" font-size="13.33" text-anchor="start">Firebase_Database1</text><path d="M574.50 368.00H580.90L577.70 371.80Z" fill="#1b914b"/><text x="590.50" y="373.40" fill="#fff" font-size="13.33" text-anchor="start">.</text><path d="M605.00 362.60H705.70Q709.70 362.60 709.70 366.60V373.00Q709.70 377.00 705.70 377.00H605.00Q601.00 377.00 601.00 373.00V366.60Q601.00 362.60 605.00 362.60Z" fill="#a9d5b4"/><text x="605.40" y="373.50" fill="#000" font-size="13.33" text-anchor="start">Project Bucket</text><path d="M697.00 368.00H703.40L700.20 371.80Z" fill="#1b914b"/><text x="718.20" y="373.40" fill="#fff" font-size="13.33" text-anchor="start">to</text><path d="M747.20 363.70H746.60c0 8.3 -6.8 -6.6 -6.8 6.2s6.8 -2.1 6.8 6.2H747.20Z" fill="#e2235f"/><path d="M746.60 358.50H981.50V381.50H746.60V358.50Z" fill="#e2235f"/><rect x="746.60" y="358.50" width="234.90" height="0.9" fill="#e85382"/><text x="756.00" y="373.00" fill="#fff" font-size="12" text-anchor="middle">“</text><text x="969.10" y="373.00" fill="#fff" font-size="12" text-anchor="middle">”</text><path d="M769.00 363.40H958.60Q962.60 363.40 962.60 367.40V373.80Q962.60 377.80 958.60 377.80H769.00Q765.00 377.80 765.00 373.80V367.40Q765.00 363.40 769.00 363.40Z" fill="#f29fbd"/><text x="769.40" y="374.30" fill="#000" font-size="13.33" text-anchor="start">FreeSkinsUsers/Settings/Tapjoy</text><path d="M477.60 387.50H477.00c0 8.3 -6.8 -6.6 -6.8 6.2s6.8 -2.1 6.8 6.2H477.60Z" fill="#1b914b"/><path d="M477.00 382.30H736.50V414.70H477.00V382.30Z" fill="#1c994e"/><rect x="477.00" y="382.30" width="259.50" height="0.9" fill="#4daf74"/><path d="M492.60 392.30H492.00c0 8.3 -6.8 -6.6 -6.8 6.2s6.8 -2.1 6.8 6.2H492.60Z" fill="#ff5722"/><path d="M492.00 387.10H607.00V410.50H492.00V387.10Z" fill="#ff5722"/><text x="501.60" y="402.40" fill="#fff" font-size="13.33" text-anchor="start">get</text><path d="M529.00 391.60H596.80Q600.80 391.60 600.80 395.60V402.00Q600.80 406.00 596.80 406.00H529.00Q525.00 406.00 525.00 402.00V395.60Q525.00 391.60 529.00 391.60Z" fill="#ffb79e"/><text x="529.40" y="402.50" fill="#000" font-size="13.33" text-anchor="start">selection</text><path d="M588.10 397.00H594.50L591.30 400.80Z" fill="#ff5722"/><path d="M615.20 390.80H638.70Q642.70 390.80 642.70 394.80V401.20Q642.70 405.20 638.70 405.20H615.20Q611.20 405.20 611.20 401.20V394.80Q611.20 390.80 615.20 390.80Z" fill="#a9d5b4"/><text x="615.60" y="401.70" fill="#000" font-size="13.33" text-anchor="start">=</text><path d="M630.00 396.20H636.40L633.20 400.00Z" fill="#1b914b"/><path d="M653.80 392.40H653.20c0 8.3 -6.8 -6.6 -6.8 6.2s6.8 -2.1 6.8 6.2H653.80Z" fill="#e2235f"/><path d="M653.20 387.20H727.00V410.50H653.20V387.20Z" fill="#e2235f"/><rect x="653.20" y="387.20" width="73.80" height="0.9" fill="#e85382"/><text x="662.60" y="401.70" fill="#fff" font-size="12" text-anchor="middle">“</text><text x="714.60" y="401.70" fill="#fff" font-size="12" text-anchor="middle">”</text><path d="M675.50 392.25H703.70Q707.70 392.25 707.70 396.25V402.65Q707.70 406.65 703.70 406.65H675.50Q671.50 406.65 671.50 402.65V396.25Q671.50 392.25 675.50 392.25Z" fill="#f29fbd"/><text x="675.90" y="403.15" fill="#000" font-size="13.33" text-anchor="start">True</text><path d="M449.50 476.70H728.50V486.30H455.50Q449.50 486.30 449.50 480.30V476.70Z" fill="#0b0b0b"/><path d="M456.50 415.30H728.50V484.70H454.50Q449.50 484.70 449.50 479.70V422.30Q449.50 415.30 456.50 415.30Z" fill="#6a2eae"/><rect x="453.70" y="415.30" width="274.80" height="0.9" fill="#8a5bbf"/><path d="M462.30 414.70L466.30 418.70H472.50L476.50 414.70Z" fill="#ffa53a" stroke="#ffa53a" stroke-width="0.8" stroke-linejoin="round"/><path d="M462.30 484.10L466.30 488.10H472.50L476.50 484.10Z" fill="#6a2eae" stroke="#6a2eae" stroke-width="0.8" stroke-linejoin="round"/><text x="459.20" y="430.50" fill="#fff" font-size="13.33" text-anchor="start">call</text><path d="M490.90 419.80H630.30Q634.30 419.80 634.30 423.80V430.20Q634.30 434.20 630.30 434.20H490.90Q486.90 434.20 486.90 430.20V423.80Q486.90 419.80 490.90 419.80Z" fill="#c2a6e3"/><text x="491.30" y="430.70" fill="#000" font-size="13.33" text-anchor="start">Firebase_Database1</text><path d="M621.60 425.20H628.00L624.80 429.00Z" fill="#6a2eae"/><text x="639.70" y="430.50" fill="#fff" font-size="13.33" text-anchor="start">.Store Value</text><text x="711.40" y="454.00" fill="#fff" font-size="13.33" text-anchor="end">tag</text><text x="711.40" y="477.30" fill="#fff" font-size="13.33" text-anchor="end">value To Store</text><path d="M729.10 443.40H728.50c0 8.3 -6.8 -6.6 -6.8 6.2s6.8 -2.1 6.8 6.2H729.10Z" fill="#e2235f"/><path d="M728.50 438.20H823.30V461.00H728.50V438.20Z" fill="#e2235f"/><rect x="728.50" y="438.20" width="94.80" height="0.9" fill="#e85382"/><text x="737.90" y="452.70" fill="#fff" font-size="12" text-anchor="middle">“</text><text x="810.90" y="452.70" fill="#fff" font-size="12" text-anchor="middle">”</text><path d="M750.90 443.00H800.90Q804.90 443.00 804.90 447.00V453.40Q804.90 457.40 800.90 457.40H750.90Q746.90 457.40 746.90 453.40V447.00Q746.90 443.00 750.90 443.00Z" fill="#f29fbd"/><text x="751.30" y="453.90" fill="#000" font-size="13.33" text-anchor="start">Enabled</text><path d="M729.10 466.20H728.50c0 8.3 -6.8 -6.6 -6.8 6.2s6.8 -2.1 6.8 6.2H729.10Z" fill="#e2235f"/><path d="M728.50 461.00H801.50V484.70H728.50V461.00Z" fill="#e2235f"/><rect x="728.50" y="461.00" width="73.00" height="0.9" fill="#e85382"/><text x="737.90" y="475.50" fill="#fff" font-size="12" text-anchor="middle">“</text><text x="789.10" y="475.50" fill="#fff" font-size="12" text-anchor="middle">”</text><path d="M750.90 466.25H778.90Q782.90 466.25 782.90 470.25V476.65Q782.90 480.65 778.90 480.65H750.90Q746.90 480.65 746.90 476.65V470.25Q746.90 466.25 750.90 466.25Z" fill="#f29fbd"/><text x="751.30" y="477.15" fill="#000" font-size="13.33" text-anchor="start">True</text><path d="M449.50 560.10H728.50V569.70H455.50Q449.50 569.70 449.50 563.70V560.10Z" fill="#0b0b0b"/><path d="M456.50 498.70H728.50V568.10H454.50Q449.50 568.10 449.50 563.10V505.70Q449.50 498.70 456.50 498.70Z" fill="#6a2eae"/><rect x="453.70" y="498.70" width="274.80" height="0.9" fill="#8a5bbf"/><path d="M462.30 498.10L466.30 502.10H472.50L476.50 498.10Z" fill="#ffa53a" stroke="#ffa53a" stroke-width="0.8" stroke-linejoin="round"/><path d="M462.30 567.50L466.30 571.50H472.50L476.50 567.50Z" fill="#6a2eae" stroke="#6a2eae" stroke-width="0.8" stroke-linejoin="round"/><text x="459.20" y="513.90" fill="#fff" font-size="13.33" text-anchor="start">call</text><path d="M490.90 503.20H630.30Q634.30 503.20 634.30 507.20V513.60Q634.30 517.60 630.30 517.60H490.90Q486.90 517.60 486.90 513.60V507.20Q486.90 503.20 490.90 503.20Z" fill="#c2a6e3"/><text x="491.30" y="514.10" fill="#000" font-size="13.33" text-anchor="start">Firebase_Database1</text><path d="M621.60 508.60H628.00L624.80 512.40Z" fill="#6a2eae"/><text x="639.70" y="513.90" fill="#fff" font-size="13.33" text-anchor="start">.Store Value</text><text x="711.40" y="537.40" fill="#fff" font-size="13.33" text-anchor="end">tag</text><text x="711.40" y="560.70" fill="#fff" font-size="13.33" text-anchor="end">value To Store</text><path d="M729.10 526.80H728.50c0 8.3 -6.8 -6.6 -6.8 6.2s6.8 -2.1 6.8 6.2H729.10Z" fill="#e2235f"/><path d="M728.50 521.60H823.30V544.40H728.50V521.60Z" fill="#e2235f"/><rect x="728.50" y="521.60" width="94.80" height="0.9" fill="#e85382"/><text x="737.90" y="536.10" fill="#fff" font-size="12" text-anchor="middle">“</text><text x="810.90" y="536.10" fill="#fff" font-size="12" text-anchor="middle">”</text><path d="M750.90 526.40H800.90Q804.90 526.40 804.90 530.40V536.80Q804.90 540.80 800.90 540.80H750.90Q746.90 540.80 746.90 536.80V530.40Q746.90 526.40 750.90 526.40Z" fill="#f29fbd"/><text x="751.30" y="537.30" fill="#000" font-size="13.33" text-anchor="start">Enabled</text><path d="M729.10 549.60H728.50c0 8.3 -6.8 -6.6 -6.8 6.2s6.8 -2.1 6.8 6.2H729.10Z" fill="#e2235f"/><path d="M728.50 544.40H807.60V568.10H728.50V544.40Z" fill="#e2235f"/><rect x="728.50" y="544.40" width="79.10" height="0.9" fill="#e85382"/><text x="737.90" y="558.90" fill="#fff" font-size="12" text-anchor="middle">“</text><text x="795.20" y="558.90" fill="#fff" font-size="12" text-anchor="middle">”</text><path d="M750.90 549.65H784.50Q788.50 549.65 788.50 553.65V560.05Q788.50 564.05 784.50 564.05H750.90Q746.90 564.05 746.90 560.05V553.65Q746.90 549.65 750.90 549.65Z" fill="#f29fbd"/><text x="751.30" y="560.55" fill="#000" font-size="13.33" text-anchor="start">False</text><path d="M1105.90 420.60H1285.60V452.00H1097.90V428.60Q1097.90 420.60 1105.90 420.60Z" fill="#ffa53a"/><rect x="1105.00" y="420.60" width="180.60" height="0.9" fill="#ffb865"/><path d="M1097.90 430.00H1132.00V596.00H1105.90Q1097.90 596.00 1097.90 588.00V430.00Z" fill="#ffa53a"/><path d="M1097.90 578.00H1285.60V596.00H1105.90Q1097.90 596.00 1097.90 588.00V578.00Z" fill="#ffa53a"/><text x="1107.00" y="436.70" fill="#fff" font-size="13.33" text-anchor="start">when</text><path d="M1151.00 425.30H1214.70Q1218.70 425.30 1218.70 429.30V435.70Q1218.70 439.70 1214.70 439.70H1151.00Q1147.00 439.70 1147.00 435.70V429.30Q1147.00 425.30 1151.00 425.30Z" fill="#ffdfb0"/><text x="1151.40" y="436.20" fill="#000" font-size="13.33" text-anchor="start">Settings</text><path d="M1206.00 430.70H1212.40L1209.20 434.50Z" fill="#ffa53a"/><text x="1224.40" y="436.70" fill="#fff" font-size="13.33" text-anchor="start">.Initialize</text><text x="1107.00" y="459.10" fill="#fff" font-size="13.33" text-anchor="start">do</text><path d="M1132.00 575.90H1400.40V585.50H1138.00Q1132.00 585.50 1132.00 579.50V575.90Z" fill="#0b0b0b"/><path d="M1139.00 444.70H1400.40V522.30H1132.00V451.70Q1132.00 444.70 1139.00 444.70Z" fill="#6a2eae"/><rect x="1136.20" y="444.70" width="264.20" height="0.9" fill="#8a5bbf"/><path d="M1144.80 444.10L1148.80 448.10H1155.00L1159.00 444.10Z" fill="#ffa53a" stroke="#ffa53a" stroke-width="0.8" stroke-linejoin="round"/><text x="1141.40" y="460.00" fill="#fff" font-size="13.33" text-anchor="start">call</text><path d="M1173.40 449.20H1312.50Q1316.50 449.20 1316.50 453.20V459.60Q1316.50 463.60 1312.50 463.60H1173.40Q1169.40 463.60 1169.40 459.60V453.20Q1169.40 449.20 1173.40 449.20Z" fill="#c2a6e3"/><text x="1173.80" y="460.10" fill="#000" font-size="13.33" text-anchor="start">Firebase_Database1</text><path d="M1303.80 454.60H1310.20L1307.00 458.40Z" fill="#6a2eae"/><text x="1322.20" y="460.00" fill="#fff" font-size="13.33" text-anchor="start">.Get Value</text><text x="1383.00" y="483.00" fill="#fff" font-size="13.33" text-anchor="end">tag</text><text x="1383.00" y="506.60" fill="#fff" font-size="13.33" text-anchor="end">value If Tag Not There</text><path d="M1401.60 472.20H1401.00c0 8.3 -6.8 -6.6 -6.8 6.2s6.8 -2.1 6.8 6.2H1401.60Z" fill="#e2235f"/><path d="M1401.00 467.00H1495.00V490.00H1401.00V467.00Z" fill="#e2235f"/><rect x="1401.00" y="467.00" width="94.00" height="0.9" fill="#e85382"/><text x="1410.40" y="481.50" fill="#fff" font-size="12" text-anchor="middle">“</text><text x="1482.60" y="481.50" fill="#fff" font-size="12" text-anchor="middle">”</text><path d="M1423.20 471.90H1472.50Q1476.50 471.90 1476.50 475.90V482.30Q1476.50 486.30 1472.50 486.30H1423.20Q1419.20 486.30 1419.20 482.30V475.90Q1419.20 471.90 1423.20 471.90Z" fill="#f29fbd"/><text x="1423.60" y="482.80" fill="#000" font-size="13.33" text-anchor="start">Enabled</text><path d="M1401.60 496.20H1401.00c0 8.3 -6.8 -6.6 -6.8 6.2s6.8 -2.1 6.8 6.2H1401.60Z" fill="#e2235f"/><path d="M1401.00 491.00H1450.00V514.00H1401.00V491.00Z" fill="#e2235f"/><rect x="1401.00" y="491.00" width="49.00" height="0.9" fill="#e85382"/><text x="1410.40" y="505.50" fill="#fff" font-size="12" text-anchor="middle">“</text><text x="1437.60" y="505.50" fill="#fff" font-size="12" text-anchor="middle">”</text><path d="M1423.20 495.90H1427.80Q1431.80 495.90 1431.80 499.90V506.30Q1431.80 510.30 1427.80 510.30H1423.20Q1419.20 510.30 1419.20 506.30V499.90Q1419.20 495.90 1423.20 495.90Z" fill="#f29fbd"/><path d="M1132.00 514.30H1400.40V583.60H1137.00Q1132.00 583.60 1132.00 578.60V514.30Z" fill="#6a2eae"/><rect x="1132.00" y="514.30" width="268.40" height="0.9" fill="#8a5bbf"/><path d="M1144.80 513.70L1148.80 517.70H1155.00L1159.00 513.70Z" fill="#6a2eae" stroke="#6a2eae" stroke-width="0.8" stroke-linejoin="round"/><path d="M1144.80 583.00L1148.80 587.00H1155.00L1159.00 583.00Z" fill="#6a2eae" stroke="#6a2eae" stroke-width="0.8" stroke-linejoin="round"/><text x="1141.40" y="529.60" fill="#fff" font-size="13.33" text-anchor="start">call</text><path d="M1173.40 518.80H1312.50Q1316.50 518.80 1316.50 522.80V529.20Q1316.50 533.20 1312.50 533.20H1173.40Q1169.40 533.20 1169.40 529.20V522.80Q1169.40 518.80 1173.40 518.80Z" fill="#c2a6e3"/><text x="1173.80" y="529.70" fill="#000" font-size="13.33" text-anchor="start">Firebase_Database1</text><path d="M1303.80 524.20H1310.20L1307.00 528.00Z" fill="#6a2eae"/><text x="1322.20" y="529.60" fill="#fff" font-size="13.33" text-anchor="start">.Get Value</text><text x="1383.00" y="552.60" fill="#fff" font-size="13.33" text-anchor="end">tag</text><text x="1383.00" y="576.20" fill="#fff" font-size="13.33" text-anchor="end">value If Tag Not There</text><path d="M1401.60 541.80H1401.00c0 8.3 -6.8 -6.6 -6.8 6.2s6.8 -2.1 6.8 6.2H1401.60Z" fill="#e2235f"/><path d="M1401.00 536.60H1480.60V559.60H1401.00V536.60Z" fill="#e2235f"/><rect x="1401.00" y="536.60" width="79.60" height="0.9" fill="#e85382"/><text x="1410.40" y="551.10" fill="#fff" font-size="12" text-anchor="middle">“</text><text x="1468.20" y="551.10" fill="#fff" font-size="12" text-anchor="middle">”</text><path d="M1423.20 541.50H1457.60Q1461.60 541.50 1461.60 545.50V551.90Q1461.60 555.90 1457.60 555.90H1423.20Q1419.20 555.90 1419.20 551.90V545.50Q1419.20 541.50 1423.20 541.50Z" fill="#f29fbd"/><text x="1423.60" y="552.40" fill="#000" font-size="13.33" text-anchor="start">Boost</text><path d="M1401.60 565.80H1401.00c0 8.3 -6.8 -6.6 -6.8 6.2s6.8 -2.1 6.8 6.2H1401.60Z" fill="#e2235f"/><path d="M1401.00 560.60H1450.00V583.60H1401.00V560.60Z" fill="#e2235f"/><rect x="1401.00" y="560.60" width="49.00" height="0.9" fill="#e85382"/><text x="1410.40" y="575.10" fill="#fff" font-size="12" text-anchor="middle">“</text><text x="1437.60" y="575.10" fill="#fff" font-size="12" text-anchor="middle">”</text><path d="M1423.20 565.50H1427.80Q1431.80 565.50 1431.80 569.50V575.90Q1431.80 579.90 1427.80 579.90H1423.20Q1419.20 579.90 1419.20 575.90V569.50Q1419.20 565.50 1423.20 565.50Z" fill="#f29fbd"/><path d="M469.00 693.30H627.70V725.00H461.00V701.30Q461.00 693.30 469.00 693.30Z" fill="#ffa53a"/><rect x="468.00" y="693.30" width="159.70" height="0.9" fill="#ffb865"/><path d="M461.00 700.00H495.00V869.30H469.00Q461.00 869.30 461.00 861.30V700.00Z" fill="#ffa53a"/><path d="M461.00 851.00H627.70V869.30H469.00Q461.00 869.30 461.00 861.30V851.00Z" fill="#ffa53a"/><text x="470.70" y="709.30" fill="#fff" font-size="13.33" text-anchor="start">when</text><path d="M515.00 698.30H576.00Q580.00 698.30 580.00 702.30V708.70Q580.00 712.70 576.00 712.70H515.00Q511.00 712.70 511.00 708.70V702.30Q511.00 698.30 515.00 698.30Z" fill="#ffdfb0"/><text x="515.40" y="709.20" fill="#000" font-size="13.33" text-anchor="start">Button1</text><path d="M567.30 703.70H573.70L570.50 707.50Z" fill="#ffa53a"/><text x="586.00" y="709.30" fill="#fff" font-size="13.33" text-anchor="start">.Click</text><text x="470.70" y="731.70" fill="#fff" font-size="13.33" text-anchor="start">do</text><path d="M495.00 849.30H774.30V858.90H501.00Q495.00 858.90 495.00 852.90V849.30Z" fill="#0b0b0b"/><path d="M495.00 735.00H774.30V857.30H500.00Q495.00 857.30 495.00 852.30V735.00Z" fill="#6a2eae"/><rect x="495.00" y="735.00" width="279.30" height="0.9" fill="#8a5bbf"/><path d="M507.80 856.70L511.80 860.70H518.00L522.00 856.70Z" fill="#6a2eae" stroke="#6a2eae" stroke-width="0.8" stroke-linejoin="round"/><path d="M502.00 717.30H838.60V740.70H495.00V724.30Q495.00 717.30 502.00 717.30Z" fill="#1b914b"/><rect x="499.20" y="717.30" width="339.40" height="0.9" fill="#4da972"/><path d="M507.80 716.70L511.80 720.70H518.00L522.00 716.70Z" fill="#ffa53a" stroke="#ffa53a" stroke-width="0.8" stroke-linejoin="round"/><path d="M507.80 740.10L511.80 744.10H518.00L522.00 740.10Z" fill="#1b914b" stroke="#1b914b" stroke-width="0.8" stroke-linejoin="round"/><text x="504.30" y="733.30" fill="#fff" font-size="13.33" text-anchor="start">set</text><path d="M534.70 721.70H673.70Q677.70 721.70 677.70 725.70V732.10Q677.70 736.10 673.70 736.10H534.70Q530.70 736.10 530.70 732.10V725.70Q530.70 721.70 534.70 721.70Z" fill="#a9d5b4"/><text x="535.10" y="732.60" fill="#000" font-size="13.33" text-anchor="start">Firebase_Database1</text><path d="M665.00 727.10H671.40L668.20 730.90Z" fill="#1b914b"/><text x="681.50" y="733.30" fill="#fff" font-size="13.33" text-anchor="start">.</text><path d="M694.70 721.70H796.70Q800.70 721.70 800.70 725.70V732.10Q800.70 736.10 796.70 736.10H694.70Q690.70 736.10 690.70 732.10V725.70Q690.70 721.70 694.70 721.70Z" fill="#a9d5b4"/><text x="695.10" y="732.60" fill="#000" font-size="13.33" text-anchor="start">Project Bucket</text><path d="M788.00 727.10H794.40L791.20 730.90Z" fill="#1b914b"/><text x="809.00" y="733.30" fill="#fff" font-size="13.33" text-anchor="start">to</text><path d="M838.90 722.50H838.30c0 8.3 -6.8 -6.6 -6.8 6.2s6.8 -2.1 6.8 6.2H838.90Z" fill="#e2235f"/><path d="M838.30 717.30H1072.00V740.70H838.30V717.30Z" fill="#e2235f"/><rect x="838.30" y="717.30" width="233.70" height="0.9" fill="#e85382"/><text x="847.70" y="731.80" fill="#fff" font-size="12" text-anchor="middle">“</text><text x="1059.60" y="731.80" fill="#fff" font-size="12" text-anchor="middle">”</text><path d="M860.00 722.40H1049.30Q1053.30 722.40 1053.30 726.40V732.80Q1053.30 736.80 1049.30 736.80H860.00Q856.00 736.80 856.00 732.80V726.40Q856.00 722.40 860.00 722.40Z" fill="#f29fbd"/><text x="860.40" y="733.30" fill="#000" font-size="13.33" text-anchor="start">FreeSkinsUsers/Settings/Tapjoy</text><text x="504.30" y="757.30" fill="#fff" font-size="13.33" text-anchor="start">call</text><path d="M537.30 745.50H676.00Q680.00 745.50 680.00 749.50V755.90Q680.00 759.90 676.00 759.90H537.30Q533.30 759.90 533.30 755.90V749.50Q533.30 745.50 537.30 745.50Z" fill="#c2a6e3"/><text x="537.70" y="756.40" fill="#000" font-size="13.33" text-anchor="start">Firebase_Database1</text><path d="M667.30 750.90H673.70L670.50 754.70Z" fill="#6a2eae"/><text x="685.00" y="757.30" fill="#fff" font-size="13.33" text-anchor="start">.Store Value</text><text x="757.30" y="780.00" fill="#fff" font-size="13.33" text-anchor="end">tag</text><text x="757.30" y="803.30" fill="#fff" font-size="13.33" text-anchor="end">value To Store</text><path d="M774.90 768.50H774.30c0 8.3 -6.8 -6.6 -6.8 6.2s6.8 -2.1 6.8 6.2H774.90Z" fill="#e2235f"/><path d="M774.30 763.30H854.40V786.00H774.30V763.30Z" fill="#e2235f"/><rect x="774.30" y="763.30" width="80.10" height="0.9" fill="#e85382"/><text x="783.70" y="777.80" fill="#fff" font-size="12" text-anchor="middle">“</text><text x="842.00" y="777.80" fill="#fff" font-size="12" text-anchor="middle">”</text><path d="M797.20 768.05H831.90Q835.90 768.05 835.90 772.05V778.45Q835.90 782.45 831.90 782.45H797.20Q793.20 782.45 793.20 778.45V772.05Q793.20 768.05 797.20 768.05Z" fill="#f29fbd"/><text x="797.60" y="778.95" fill="#000" font-size="13.33" text-anchor="start">Boost</text><path d="M774.90 792.20H774.30c0 8.3 -6.8 -6.6 -6.8 6.2s6.8 -2.1 6.8 6.2H774.90Z" fill="#e2235f"/><path d="M774.30 787.00H845.30V857.70H774.30V787.00Z" fill="#e2235f"/><rect x="774.30" y="787.00" width="71.00" height="0.9" fill="#e85382"/><path d="M786.90 791.80H794.90Q797.90 791.80 797.90 794.80V802.80Q797.90 805.80 794.90 805.80H786.90Q783.90 805.80 783.90 802.80V794.80Q783.90 791.80 786.90 791.80Z" fill="#6b3fa8"/><g transform="translate(790.90 798.80)"><circle r="4" fill="none" stroke="#e6d8ff" stroke-width="2.2" stroke-dasharray="1.6 1.54"/><circle r="3.2" fill="#e6d8ff"/><circle r="1.6" fill="#6b3fa8"/></g><text x="808.20" y="802.30" fill="#fff" font-size="13.33" text-anchor="start">join</text><path d="M845.90 792.20H845.30c0 8.3 -6.8 -6.6 -6.8 6.2s6.8 -2.1 6.8 6.2H845.90Z" fill="#e2235f"/><path d="M845.30 787.00H900.00V810.10H845.30V787.00Z" fill="#e2235f"/><rect x="845.30" y="787.00" width="54.70" height="0.9" fill="#e85382"/><text x="854.70" y="801.50" fill="#fff" font-size="12" text-anchor="middle">“</text><text x="887.60" y="801.50" fill="#fff" font-size="12" text-anchor="middle">”</text><path d="M868.20 791.95H877.00Q881.00 791.95 881.00 795.95V802.35Q881.00 806.35 877.00 806.35H868.20Q864.20 806.35 864.20 802.35V795.95Q864.20 791.95 868.20 791.95Z" fill="#f29fbd"/><text x="868.60" y="802.85" fill="#000" font-size="13.33" text-anchor="start">+</text><path d="M845.90 816.00H845.30c0 8.3 -6.8 -6.6 -6.8 6.2s6.8 -2.1 6.8 6.2H845.90Z" fill="#72bf4f"/><path d="M845.30 810.80H1003.50V834.50H845.30V810.80Z" fill="#72bf4f"/><rect x="845.30" y="810.80" width="158.20" height="0.9" fill="#91cd75"/><path d="M855.10 815.30H932.70Q936.70 815.30 936.70 819.30V825.70Q936.70 829.70 932.70 829.70H855.10Q851.10 829.70 851.10 825.70V819.30Q851.10 815.30 855.10 815.30Z" fill="#c6e5b6"/><text x="855.50" y="826.20" fill="#000" font-size="13.33" text-anchor="start">Text_Box1</text><path d="M924.00 820.70H930.40L927.20 824.50Z" fill="#72bf4f"/><text x="939.50" y="826.00" fill="#fff" font-size="13.33" text-anchor="start">.</text><path d="M954.00 815.30H994.00Q998.00 815.30 998.00 819.30V825.70Q998.00 829.70 994.00 829.70H954.00Q950.00 829.70 950.00 825.70V819.30Q950.00 815.30 954.00 815.30Z" fill="#c6e5b6"/><text x="954.40" y="826.20" fill="#000" font-size="13.33" text-anchor="start">Text</text><path d="M985.30 820.70H991.70L988.50 824.50Z" fill="#72bf4f"/><path d="M845.90 839.70H845.30c0 8.3 -6.8 -6.6 -6.8 6.2s6.8 -2.1 6.8 6.2H845.90Z" fill="#e2235f"/><path d="M845.30 834.50H903.90V857.70H845.30V834.50Z" fill="#e2235f"/><rect x="845.30" y="834.50" width="58.60" height="0.9" fill="#e85382"/><text x="854.70" y="849.00" fill="#fff" font-size="12" text-anchor="middle">“</text><text x="891.50" y="849.00" fill="#fff" font-size="12" text-anchor="middle">”</text><path d="M868.20 839.50H881.00Q885.00 839.50 885.00 843.50V849.90Q885.00 853.90 881.00 853.90H868.20Q864.20 853.90 864.20 849.90V843.50Q864.20 839.50 868.20 839.50Z" fill="#f29fbd"/><text x="868.60" y="850.40" fill="#000" font-size="13.33" text-anchor="start">%</text><path d="M1124.25 675.00H1389.50V730.00H1116.25V683.00Q1116.25 675.00 1124.25 675.00Z" fill="#ffa53a"/><rect x="1123.00" y="675.00" width="266.50" height="0.9" fill="#ffb865"/><path d="M1116.25 690.00H1150.00V862.00H1124.25Q1116.25 862.00 1116.25 854.00V690.00Z" fill="#ffa53a"/><path d="M1116.25 845.00H1389.50V862.00H1124.25Q1116.25 862.00 1116.25 854.00V845.00Z" fill="#ffa53a"/><text x="1125.00" y="690.75" fill="#fff" font-size="13.33" text-anchor="start">when</text><path d="M1169.50 679.80H1308.50Q1312.50 679.80 1312.50 683.80V690.20Q1312.50 694.20 1308.50 694.20H1169.50Q1165.50 694.20 1165.50 690.20V683.80Q1165.50 679.80 1169.50 679.80Z" fill="#ffdfb0"/><text x="1169.90" y="690.70" fill="#000" font-size="13.33" text-anchor="start">Firebase_Database1</text><path d="M1299.80 685.20H1306.20L1303.00 689.00Z" fill="#ffa53a"/><text x="1318.00" y="690.75" fill="#fff" font-size="13.33" text-anchor="start">.Got Value</text><path d="M1137.00 702.50H1157.00Q1161.00 702.50 1161.00 706.50V713.50Q1161.00 717.50 1157.00 717.50H1137.00Q1133.00 717.50 1133.00 713.50V706.50Q1133.00 702.50 1137.00 702.50Z" fill="#f0b294"/><path d="M1137.70 703.70H1156.30Q1159.80 703.70 1159.80 707.20V712.80Q1159.80 716.30 1156.30 716.30H1137.70Q1134.20 716.30 1134.20 712.80V707.20Q1134.20 703.70 1137.70 703.70Z" fill="#e9977a"/><text x="1138.00" y="713.50" fill="#000" font-size="13.33" text-anchor="start">tag</text><path d="M1177.00 702.50H1211.00Q1215.00 702.50 1215.00 706.50V713.50Q1215.00 717.50 1211.00 717.50H1177.00Q1173.00 717.50 1173.00 713.50V706.50Q1173.00 702.50 1177.00 702.50Z" fill="#f0b294"/><path d="M1177.70 703.70H1210.30Q1213.80 703.70 1213.80 707.20V712.80Q1213.80 716.30 1210.30 716.30H1177.70Q1174.20 716.30 1174.20 712.80V707.20Q1174.20 703.70 1177.70 703.70Z" fill="#e9977a"/><text x="1178.00" y="713.50" fill="#000" font-size="13.33" text-anchor="start">value</text><text x="1125.00" y="736.25" fill="#fff" font-size="13.33" text-anchor="start">do</text><path d="M1150.00 843.00H1223.00V852.60H1156.00Q1150.00 852.60 1150.00 846.60V843.00Z" fill="#0b0b0b"/><path d="M1157.00 722.00H1223.00V851.00H1157.00Q1150.00 851.00 1150.00 844.00V729.00Q1150.00 722.00 1157.00 722.00Z" fill="#ffa53a"/><path d="M1150.5 730Q1150.5 722.5 1158 722.5H1223" fill="none" stroke="#e8902a" stroke-width="0.9"/><path d="M1162.80 721.40L1166.80 725.40H1173.00L1177.00 721.40Z" fill="#ffa53a" stroke="#ffa53a" stroke-width="0.8" stroke-linejoin="round"/><path d="M1162.80 850.40L1166.80 854.40H1173.00L1177.00 850.40Z" fill="#ffa53a" stroke="#ffa53a" stroke-width="0.8" stroke-linejoin="round"/><path d="M1162.25 727.00H1170.25Q1173.25 727.00 1173.25 730.00V738.00Q1173.25 741.00 1170.25 741.00H1162.25Q1159.25 741.00 1159.25 738.00V730.00Q1159.25 727.00 1162.25 727.00Z" fill="#6b3fa8"/><g transform="translate(1166.25 734.00)"><circle r="4" fill="none" stroke="#e6d8ff" stroke-width="2.2" stroke-dasharray="1.6 1.54"/><circle r="3.2" fill="#e6d8ff"/><circle r="1.6" fill="#6b3fa8"/></g><text x="1183.75" y="737.50" fill="#fff" font-size="13.33" text-anchor="start">if</text><text x="1159.25" y="770.50" fill="#fff" font-size="13.33" text-anchor="start">then</text><text x="1159.25" y="797.50" fill="#fff" font-size="13.33" text-anchor="start">else if</text><text x="1159.25" y="830.50" fill="#fff" font-size="13.33" text-anchor="start">then</text><path d="M1222.60 727.20H1222.00c0 8.3 -6.8 -6.6 -6.8 6.2s6.8 -2.1 6.8 6.2H1222.60Z" fill="#e2235f"/><path d="M1222.00 722.00H1551.00V755.00H1222.00V722.00Z" fill="#e2235f"/><rect x="1222.00" y="722.00" width="329.00" height="0.9" fill="#e85382"/><text x="1231.75" y="741.25" fill="#fff" font-size="13.33" text-anchor="start">compare texts</text><path d="M1331.10 732.20H1330.50c0 8.3 -6.8 -6.6 -6.8 6.2s6.8 -2.1 6.8 6.2H1331.10Z" fill="#ff5722"/><path d="M1330.50 727.00H1410.75V750.00H1330.50V727.00Z" fill="#ff5722"/><text x="1339.50" y="742.30" fill="#fff" font-size="13.33" text-anchor="start">get</text><path d="M1367.00 731.30H1401.50Q1405.50 731.30 1405.50 735.30V741.70Q1405.50 745.70 1401.50 745.70H1367.00Q1363.00 745.70 1363.00 741.70V735.30Q1363.00 731.30 1367.00 731.30Z" fill="#ffb79e"/><text x="1367.40" y="742.20" fill="#000" font-size="13.33" text-anchor="start">tag</text><path d="M1392.80 736.70H1399.20L1396.00 740.50Z" fill="#ff5722"/><path d="M1419.00 731.20H1446.00Q1450.00 731.20 1450.00 735.20V741.60Q1450.00 745.60 1446.00 745.60H1419.00Q1415.00 745.60 1415.00 741.60V735.20Q1415.00 731.20 1419.00 731.20Z" fill="#f29fbd"/><text x="1419.40" y="742.10" fill="#000" font-size="13.33" text-anchor="start">=</text><path d="M1437.30 736.60H1443.70L1440.50 740.40Z" fill="#e2235f"/><rect x="1460.75" y="727.00" width="81.25" height="23" fill="none" stroke="#b31a4c" stroke-width="1"/><path d="M1461.35 732.20H1460.75c0 8.3 -6.8 -6.6 -6.8 6.2s6.8 -2.1 6.8 6.2H1461.35Z" fill="#e2235f"/><path d="M1460.75 727.00H1542.00V750.00H1460.75V727.00Z" fill="#e2235f"/><rect x="1460.75" y="727.00" width="81.25" height="0.9" fill="#e85382"/><text x="1470.15" y="741.50" fill="#fff" font-size="12" text-anchor="middle">“</text><text x="1529.60" y="741.50" fill="#fff" font-size="12" text-anchor="middle">”</text><path d="M1483.50 731.90H1518.50Q1522.50 731.90 1522.50 735.90V742.30Q1522.50 746.30 1518.50 746.30H1483.50Q1479.50 746.30 1479.50 742.30V735.90Q1479.50 731.90 1483.50 731.90Z" fill="#f29fbd"/><text x="1483.90" y="742.80" fill="#000" font-size="13.33" text-anchor="start">Boost</text><path d="M1222.60 787.20H1222.00c0 8.3 -6.8 -6.6 -6.8 6.2s6.8 -2.1 6.8 6.2H1222.60Z" fill="#e2235f"/><path d="M1222.00 782.00H1566.00V815.00H1222.00V782.00Z" fill="#e2235f"/><rect x="1222.00" y="782.00" width="344.00" height="0.9" fill="#e85382"/><text x="1231.75" y="801.25" fill="#fff" font-size="13.33" text-anchor="start">compare texts</text><path d="M1331.10 792.20H1330.50c0 8.3 -6.8 -6.6 -6.8 6.2s6.8 -2.1 6.8 6.2H1331.10Z" fill="#ff5722"/><path d="M1330.50 787.00H1410.75V810.00H1330.50V787.00Z" fill="#ff5722"/><text x="1339.50" y="802.30" fill="#fff" font-size="13.33" text-anchor="start">get</text><path d="M1367.00 791.30H1401.50Q1405.50 791.30 1405.50 795.30V801.70Q1405.50 805.70 1401.50 805.70H1367.00Q1363.00 805.70 1363.00 801.70V795.30Q1363.00 791.30 1367.00 791.30Z" fill="#ffb79e"/><text x="1367.40" y="802.20" fill="#000" font-size="13.33" text-anchor="start">tag</text><path d="M1392.80 796.70H1399.20L1396.00 800.50Z" fill="#ff5722"/><path d="M1419.00 791.20H1446.00Q1450.00 791.20 1450.00 795.20V801.60Q1450.00 805.60 1446.00 805.60H1419.00Q1415.00 805.60 1415.00 801.60V795.20Q1415.00 791.20 1419.00 791.20Z" fill="#f29fbd"/><text x="1419.40" y="802.10" fill="#000" font-size="13.33" text-anchor="start">=</text><path d="M1437.30 796.60H1443.70L1440.50 800.40Z" fill="#e2235f"/><rect x="1460.75" y="787.00" width="96.25" height="23" fill="none" stroke="#b31a4c" stroke-width="1"/><path d="M1461.35 792.20H1460.75c0 8.3 -6.8 -6.6 -6.8 6.2s6.8 -2.1 6.8 6.2H1461.35Z" fill="#e2235f"/><path d="M1460.75 787.00H1557.00V810.00H1460.75V787.00Z" fill="#e2235f"/><rect x="1460.75" y="787.00" width="96.25" height="0.9" fill="#e85382"/><text x="1470.15" y="801.50" fill="#fff" font-size="12" text-anchor="middle">“</text><text x="1544.60" y="801.50" fill="#fff" font-size="12" text-anchor="middle">”</text><path d="M1483.50 791.90H1533.50Q1537.50 791.90 1537.50 795.90V802.30Q1537.50 806.30 1533.50 806.30H1483.50Q1479.50 806.30 1479.50 802.30V795.90Q1479.50 791.90 1483.50 791.90Z" fill="#f29fbd"/><text x="1483.90" y="802.80" fill="#000" font-size="13.33" text-anchor="start">Enabled</text><path d="M1195.75 770.75H1414.00V780.35H1201.75Q1195.75 780.35 1195.75 774.35V770.75Z" fill="#0b0b0b"/><path d="M1202.75 755.75H1414.00V778.75H1200.75Q1195.75 778.75 1195.75 773.75V762.75Q1195.75 755.75 1202.75 755.75Z" fill="#1b914b"/><rect x="1199.95" y="755.75" width="214.05" height="0.9" fill="#4da972"/><path d="M1208.55 778.15L1212.55 782.15H1218.75L1222.75 778.15Z" fill="#1b914b" stroke="#1b914b" stroke-width="0.8" stroke-linejoin="round"/><text x="1204.50" y="771.25" fill="#fff" font-size="13.33" text-anchor="start">set</text><path d="M1234.00 760.00H1312.25Q1316.25 760.00 1316.25 764.00V770.40Q1316.25 774.40 1312.25 774.40H1234.00Q1230.00 774.40 1230.00 770.40V764.00Q1230.00 760.00 1234.00 760.00Z" fill="#a9d5b4"/><text x="1234.40" y="770.90" fill="#000" font-size="13.33" text-anchor="start">Text_Box1</text><path d="M1303.55 765.40H1309.95L1306.75 769.20Z" fill="#1b914b"/><text x="1320.00" y="771.25" fill="#fff" font-size="13.33" text-anchor="start">.</text><path d="M1332.75 760.00H1373.00Q1377.00 760.00 1377.00 764.00V770.40Q1377.00 774.40 1373.00 774.40H1332.75Q1328.75 774.40 1328.75 770.40V764.00Q1328.75 760.00 1332.75 760.00Z" fill="#a9d5b4"/><text x="1333.15" y="770.90" fill="#000" font-size="13.33" text-anchor="start">Text</text><path d="M1364.30 765.40H1370.70L1367.50 769.20Z" fill="#1b914b"/><text x="1385.75" y="771.25" fill="#fff" font-size="13.33" text-anchor="start">to</text><path d="M1414.35 760.95H1413.75c0 8.3 -6.8 -6.6 -6.8 6.2s6.8 -2.1 6.8 6.2H1414.35Z" fill="#ff5722"/><path d="M1413.75 755.75H1507.50V778.75H1413.75V755.75Z" fill="#ff5722"/><text x="1423.25" y="771.05" fill="#fff" font-size="13.33" text-anchor="start">get</text><path d="M1450.25 760.05H1498.00Q1502.00 760.05 1502.00 764.05V770.45Q1502.00 774.45 1498.00 774.45H1450.25Q1446.25 774.45 1446.25 770.45V764.05Q1446.25 760.05 1450.25 760.05Z" fill="#ffb79e"/><text x="1450.65" y="770.95" fill="#000" font-size="13.33" text-anchor="start">value</text><path d="M1489.30 765.45H1495.70L1492.50 769.25Z" fill="#ff5722"/><path d="M1195.75 830.75H1436.50V840.35H1201.75Q1195.75 840.35 1195.75 834.35V830.75Z" fill="#0b0b0b"/><path d="M1202.75 815.50H1436.50V838.75H1200.75Q1195.75 838.75 1195.75 833.75V822.50Q1195.75 815.50 1202.75 815.50Z" fill="#1b914b"/><rect x="1199.95" y="815.50" width="236.55" height="0.9" fill="#4da972"/><path d="M1208.55 838.15L1212.55 842.15H1218.75L1222.75 838.15Z" fill="#1b914b" stroke="#1b914b" stroke-width="0.8" stroke-linejoin="round"/><text x="1204.50" y="831.25" fill="#fff" font-size="13.33" text-anchor="start">set</text><path d="M1234.00 819.80H1303.00Q1307.00 819.80 1307.00 823.80V830.20Q1307.00 834.20 1303.00 834.20H1234.00Q1230.00 834.20 1230.00 830.20V823.80Q1230.00 819.80 1234.00 819.80Z" fill="#a9d5b4"/><text x="1234.40" y="830.70" fill="#000" font-size="13.33" text-anchor="start">Spinner1</text><path d="M1294.30 825.20H1300.70L1297.50 829.00Z" fill="#1b914b"/><text x="1311.50" y="831.25" fill="#fff" font-size="13.33" text-anchor="start">.</text><path d="M1324.00 819.80H1394.75Q1398.75 819.80 1398.75 823.80V830.20Q1398.75 834.20 1394.75 834.20H1324.00Q1320.00 834.20 1320.00 830.20V823.80Q1320.00 819.80 1324.00 819.80Z" fill="#a9d5b4"/><text x="1324.40" y="830.70" fill="#000" font-size="13.33" text-anchor="start">Selection</text><path d="M1386.05 825.20H1392.45L1389.25 829.00Z" fill="#1b914b"/><text x="1407.00" y="831.25" fill="#fff" font-size="13.33" text-anchor="start">to</text><path d="M1436.85 820.70H1436.25c0 8.3 -6.8 -6.6 -6.8 6.2s6.8 -2.1 6.8 6.2H1436.85Z" fill="#ff5722"/><path d="M1436.25 815.50H1528.75V838.75H1436.25V815.50Z" fill="#ff5722"/><text x="1445.00" y="830.80" fill="#fff" font-size="13.33" text-anchor="start">get</text><path d="M1471.50 819.92H1519.25Q1523.25 819.92 1523.25 823.92V830.32Q1523.25 834.32 1519.25 834.32H1471.50Q1467.50 834.32 1467.50 830.32V823.92Q1467.50 819.92 1471.50 819.92Z" fill="#ffb79e"/><text x="1471.90" y="830.82" fill="#000" font-size="13.33" text-anchor="start">value</text><path d="M1510.55 825.33H1516.95L1513.75 829.12Z" fill="#ff5722"/><path d="M1214.30 911.60H1404.20V934.70H1214.30Q1207.30 934.70 1207.30 927.70V918.60Q1207.30 911.60 1214.30 911.60Z" fill="#1b914b"/><rect x="1211.50" y="911.60" width="192.70" height="0.9" fill="#4da972"/><path d="M1220.10 911.00L1224.10 915.00H1230.30L1234.30 911.00Z" fill="#121212" stroke="#121212" stroke-width="0.8" stroke-linejoin="round"/><path d="M1220.10 934.10L1224.10 938.10H1230.30L1234.30 934.10Z" fill="#1b914b" stroke="#1b914b" stroke-width="0.8" stroke-linejoin="round"/><text x="1216.00" y="926.60" fill="#fff" font-size="13.33" text-anchor="start">set</text><path d="M1246.00 916.20H1301.60Q1305.60 916.20 1305.60 920.20V926.60Q1305.60 930.60 1301.60 930.60H1246.00Q1242.00 930.60 1242.00 926.60V920.20Q1242.00 916.20 1246.00 916.20Z" fill="#a9d5b4"/><text x="1246.40" y="927.10" fill="#000" font-size="13.33" text-anchor="start">Label5</text><path d="M1292.90 921.60H1299.30L1296.10 925.40Z" fill="#1b914b"/><text x="1309.50" y="926.60" fill="#fff" font-size="13.33" text-anchor="start">.</text><path d="M1323.10 916.20H1362.90Q1366.90 916.20 1366.90 920.20V926.60Q1366.90 930.60 1362.90 930.60H1323.10Q1319.10 930.60 1319.10 926.60V920.20Q1319.10 916.20 1323.10 916.20Z" fill="#a9d5b4"/><text x="1323.50" y="927.10" fill="#000" font-size="13.33" text-anchor="start">Text</text><path d="M1354.20 921.60H1360.60L1357.40 925.40Z" fill="#1b914b"/><text x="1375.40" y="926.60" fill="#fff" font-size="13.33" text-anchor="start">to</text><path d="M1404.60 916.80H1404.00c0 8.3 -6.8 -6.6 -6.8 6.2s6.8 -2.1 6.8 6.2H1404.60Z" fill="#ff5722"/><path d="M1404.00 911.60H1521.50V934.70H1404.00V911.60Z" fill="#ff5722"/><text x="1437.60" y="926.90" fill="#fff" font-size="13.33" text-anchor="start">get</text><path d="M1464.80 915.95H1511.70Q1515.70 915.95 1515.70 919.95V926.35Q1515.70 930.35 1511.70 930.35H1464.80Q1460.80 930.35 1460.80 926.35V919.95Q1460.80 915.95 1464.80 915.95Z" fill="#ffb79e"/><text x="1465.20" y="926.85" fill="#000" font-size="13.33" text-anchor="start">value</text><path d="M1503.00 921.35H1509.40L1506.20 925.15Z" fill="#ff5722"/><circle cx="1420.3" cy="922.8" r="7.3" fill="#d4202a" stroke="#3a0a0a" stroke-width=".8"/><path d="M1416.6 919.1L1424 926.5M1424 919.1L1416.6 926.5" stroke="#fff" stroke-width="1.5"/></svg><svg style="left:1800px;top:245px" width="120" height="100" viewBox="0 0 120 100">
<path d="M49 15Q50 7 57 7.5Q64 8 65 15Z" fill="#012a20"/>
<path d="M86 26L96 28Q101 45 101.5 78Q97 80 90 79Z" fill="#012a20"/>
<path d="M17 32L21 28L23 29.5L28 23.5L30.5 21L33 24L38.5 23L40.3 53.5H25Z" fill="#d96536" stroke="#02261d" stroke-width="1.8" stroke-linejoin="round"/>
<path d="M41.2 20H47.7V17Q48 15.3 50 15.3H56Q58.3 15.3 58.3 17V20H65.3V53.7H41.2Z" fill="#3ba3d2" stroke="#02261d" stroke-width="1.8" stroke-linejoin="round"/>
<path d="M72.2 20.4L78.5 22.5L77.5 25.5L83 27L87 25.3L94 27.8L82.4 56.5L66.7 53.7Z" fill="#85538d" stroke="#02261d" stroke-width="1.8" stroke-linejoin="round"/>
<path d="M25 54.2Q55 53.5 81.5 55.6Q88 56.5 89 62L89.8 83Q80 88.5 55.6 88Q28 87.5 19 82Q15.5 70 17.5 62Q20 55 25 54.2Z" fill="#2fb9ab" stroke="#02261d" stroke-width="2" stroke-linejoin="round"/>
<path d="M24.5 55.5Q16 64 19 74Q24 81 40 79.5Q58 77 72 66Q78 61 82 58.5" fill="none" stroke="#02261d" stroke-width="1.6"/>
<path d="M21 57Q13 67 18 77Q26 84 44 82Q62 79 76 68Q81 64 85 61" fill="none" stroke="#02261d" stroke-width="1.4"/>
<path d="M64 73.5Q70 76.5 71.5 72Q73 68.5 71 66.5" fill="none" stroke="#02261d" stroke-width="1.4"/>
<path d="M82.5 58Q84 70 83.5 85" fill="none" stroke="#02261d" stroke-width="1.5"/>
</svg><div class="r" style="left:1910px;top:414px;width:12px;height:432px;background:#cccccc;border-radius:6px"></div><div class="r" style="left:726px;top:1015px;width:925px;height:9.5px;background:#cccccc;border-radius:5px"></div><svg style="left:1852px;top:798px" width="40" height="40"><circle cx="20.9" cy="19.7" r="11" stroke="#e8e8e8" stroke-width="2" fill="none"/><circle cx="20.9" cy="19.7" r="3.8" fill="#e8e8e8"/><path d="M20.9 5V8.7M20.9 30.7V34.4M6.2 19.7H9.9M31.9 19.7H35.6" stroke="#e8e8e8" stroke-width="2"/></svg><svg style="left:1852px;top:842px" width="40" height="74"><circle cx="19.9" cy="19.5" r="14.8" stroke="#e8e8e8" stroke-width="2" fill="none"/><path d="M19.9 12.2V26.8M12.6 19.5H27.2" stroke="#e8e8e8" stroke-width="2"/><circle cx="19.9" cy="54.1" r="14.8" stroke="#e8e8e8" stroke-width="2" fill="none"/><path d="M12.6 54.1H27.2" stroke="#e8e8e8" stroke-width="2.2"/></svg><svg style="left:1840px;top:936px" width="50" height="60"><path d="M14 6Q15 3 18 3H31Q34 3 35 6Z" fill="#e3e3e3"/><rect x="2.8" y="6" width="42.4" height="6.1" fill="#e3e3e3"/><path d="M5.8 14.7H42.1V53Q42.1 57 38.1 57H9.8Q5.8 57 5.8 53Z" fill="#e3e3e3"/></svg><svg style="left:330px;top:915px" width="120" height="60"><path d="M9.5 16.6L18.3 8.2L27 16.6Z" fill="#fff"/><path d="M9.5 45L18.3 53.8L27 45Z" fill="#fff"/><path d="M75.9 16.6L85 8.2L94.1 16.6Z" fill="#fff"/><path d="M75.9 45L85 53.8L94.1 45Z" fill="#fff"/><path d="M16.1 23.8L23.9 37.2H8.3Z" fill="#b5b33f" stroke="#b5b33f" stroke-width="1.2" stroke-linejoin="round"/><path d="M16.1 28V33M16.1 34.5V35.6" stroke="#eee" stroke-width="1.2"/><circle cx="80.7" cy="31" r="7.3" fill="#d21f27"/><path d="M77.2 27.5L84.2 34.5M84.2 27.5L77.2 34.5" stroke="#ddd" stroke-width="1.6"/></svg><div class="t" style="left:358.5px;top:941.5px;font-size:12.5px;color:#aaa">1</div><div class="t" style="left:423.5px;top:941.5px;font-size:12.5px;color:#aaa">1</div><div class="r" style="left:322px;top:972.4px;width:121.7px;height:21px;border:2px solid #9a9a9a;background:#121212"></div><div class="t" style="left:337px;top:977px;font-size:13px;color:#e8e8e8">Show Warnings</div><div class="r" style="left:0;top:1032px;width:1920px;height:48px;background:linear-gradient(90deg,#17222a 0%,#18242e 25%,#1a2346 32%,#1e1d5a 38%,#2b1a4c 44%,#381a46 50%,#3a1847 62%,#3d1548 78%,#3b1645 90%,#33163a 100%)"></div><svg style="left:21px;top:1045px" width="24" height="24"><defs><linearGradient id="wg" x1="0" y1="0" x2="1" y2="1"><stop offset="0" stop-color="#7fd4fb"/><stop offset="1" stop-color="#0f96f0"/></linearGradient></defs><path d="M0 1.2Q0 0 1.2 0H11.2V11H0ZM12.2 0H22.3Q23.5 0 23.5 1.2V11H12.2ZM0 12.1H11.2V23.2H1.2Q0 23.2 0 22ZM12.2 12.1H23.5V22Q23.5 23.2 22.3 23.2H12.2Z" fill="url(#wg)"/></svg><svg style="left:65px;top:1044px" width="24" height="24"><circle cx="13.5" cy="10" r="8" stroke="#e8e8e8" stroke-width="2.4" fill="#474b52"/><path d="M8 15.5L2 22" stroke="#e8e8e8" stroke-width="2.6" stroke-linecap="round"/></svg><svg style="left:109px;top:1044px" width="24" height="24"><circle cx="12" cy="12" r="11.5" fill="#fff"/><rect x="6" y="7" width="12" height="11" rx="2" fill="#3f78d8"/><path d="M8 16L11 9L14 16M16 9V16" stroke="#1a2a4a" stroke-width="1.4" fill="none"/></svg><svg style="left:156px;top:1043px" width="20" height="26"><path d="M2 3Q2 1 4 1H14Q16 1 16 3V25H2Z" fill="#38c0f2"/><rect x="2" y="10" width="14" height="5" fill="#1fa2e6"/><rect x="2" y="15" width="14" height="5" fill="#0d78c8"/><rect x="2" y="20" width="14" height="5" fill="#1559a0"/></svg><div class="r" style="left:164px;top:1039px;width:21px;height:16px;background:#dea3e6;border-radius:8px"></div><div class="t" style="left:167.80px;top:1041.77px;font-size:11.5px;color:#111;font-weight:400;">50</div><svg style="left:196px;top:1044px" width="25" height="22"><path d="M1 2Q1 1 2 1H9L11 3H23Q24 3 24 4V20Q24 21 23 21H2Q1 21 1 20Z" fill="#f0b429"/><path d="M1 6H24V20Q24 21 23 21H2Q1 21 1 20Z" fill="#ffd35c"/><rect x="7" y="14" width="11" height="6" rx="1" fill="#2b7de0"/></svg><svg style="left:241px;top:1045px" width="24" height="22"><path d="M1.5 15Q1 3 12 2Q23 2.5 23 14L21 17Q18 14 12 14Q6 14 3 18Z" fill="#7b7e80"/><path d="M6 4Q12 1.5 18 4Q13 4 9 7Z" fill="#b8b8b8"/><path d="M1.5 11Q3 9 7 9.5L8 13Q4 13 2 15Z" fill="#4a4e52"/><path d="M4 17Q10 12.5 19 15L17 20Q12 18 6 21Z" fill="#2b2d30"/><path d="M14 7Q18 6 21 9" stroke="#a0a0a0" stroke-width="1.2" fill="none"/></svg><div class="r" style="left:277.00px;top:1037.00px;width:40.00px;height:39.00px;background:#2a2e36;border-radius:4px;"></div><svg style="left:285px;top:1045px" width="24" height="24"><circle cx="12" cy="12" r="11" fill="#db4437"/><path d="M12 12L1.5 9.5A11 11 0 0 0 8 22.3Z" fill="#0f9d58"/><path d="M12 12L8 22.3A11 11 0 0 0 22.5 10Z" fill="#f4b400"/><circle cx="12" cy="12" r="5" fill="#fff"/><circle cx="12" cy="12" r="4" fill="#4285f4"/></svg><svg style="left:298px;top:1038px" width="16" height="16"><circle cx="8" cy="8" r="8" fill="#2a1e14"/><path d="M3 4L5 6Q8 4.5 11 6L13 4V10Q12 14 8 14.5Q4 14 3 10Z" fill="#c8742e"/><path d="M6 7L7 9M10 7L9 9M8 10V12M4.5 9L6 10M11.5 9L10 10" stroke="#2a1a10" stroke-width="0.9"/><path d="M6 12Q8 13.5 10 12" stroke="#eee" stroke-width="1" fill="none"/></svg><div class="r" style="left:289.00px;top:1072.00px;width:16.00px;height:3.00px;background:#d9a3e6;border-radius:2px;"></div><svg style="left:1743px;top:1050px" width="14" height="9"><path d="M1 8L7 2L13 8" stroke="#fff" stroke-width="1.3" fill="none"/></svg><svg style="left:1769px;top:1045px" width="18" height="18"><rect x="1" y="3" width="12" height="9" stroke="#fff" stroke-width="1.2" fill="none"/><path d="M5 15H10M7.5 12V15" stroke="#fff" stroke-width="1.2"/><rect x="13" y="1" width="4" height="9" rx="1.5" stroke="#fff" stroke-width="1.1" fill="#3a1744"/></svg><svg style="left:1793px;top:1046px" width="20" height="16"><path d="M1 5H4L8 1.5V14.5L4 11H1Z" stroke="#fff" stroke-width="1.1" fill="none"/><path d="M11 5Q12.5 8 11 11M13.5 3Q16 8 13.5 13M16 1.5Q19.5 8 16 14.5" stroke="#fff" stroke-width="1.1" fill="none"/></svg><div class="t" style="left:1810px;top:1042px;width:66px;text-align:right;font-size:12px;color:#fff">6:45 PM</div><div class="t" style="left:1810px;top:1058px;width:66px;text-align:right;font-size:12px;color:#fff">2/11/2022</div><svg style="left:1885px;top:1046px" width="16" height="16"><path d="M9 1A7 7 0 1 0 15 11A6 6 0 0 1 9 1Z" stroke="#fff" stroke-width="1.2" fill="none"/></svg>
</body></html>
